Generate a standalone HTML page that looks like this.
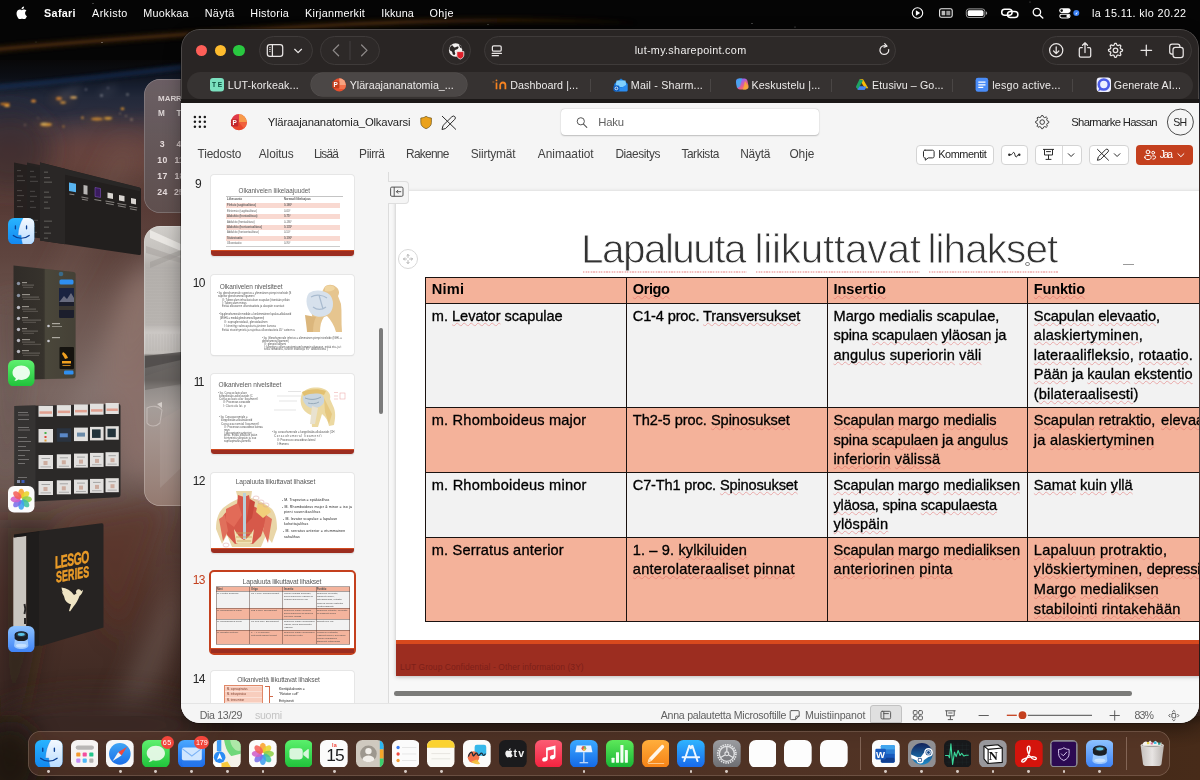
<!DOCTYPE html><html lang="fi"><head><meta charset="utf-8"><title>Yläraajananatomia_Olkavarsi</title><style>
html,body{margin:0;padding:0;background:#1a1210;width:1200px;height:780px;overflow:hidden;}
#root{filter:blur(0.4px);position:relative;width:1200px;height:780px;overflow:hidden;font-family:"Liberation Sans",sans-serif;}
#root div,#root svg,#root span{position:absolute;}
.t{white-space:pre;display:block;}
#win{left:181px;top:29.3px;width:1018.3px;height:693.4px;border-radius:18.5px;overflow:hidden;}
#winin{left:-181px;top:-29.3px;width:1200px;height:780px;}
.sq{height:1.7px;background:repeating-linear-gradient(90deg,rgba(232,130,130,0.5) 0 1.300px,rgba(232,130,130,0.18) 1.300px 2.600px);}
.t u{text-decoration:underline wavy rgba(225,85,85,0.42);text-decoration-thickness:0.5px;text-underline-offset:0.9px;text-decoration-skip-ink:none;}
</style></head><body><div id="root"><svg id="wall" style="left:0;top:0" width="1200" height="780" viewBox="0 0 1200 780">
<defs>
<linearGradient id="wg" x1="0" y1="0" x2="0" y2="1">
<stop offset="0" stop-color="#040404"/>
<stop offset="0.075" stop-color="#080707"/>
<stop offset="0.10" stop-color="#0c0f16"/>
<stop offset="0.112" stop-color="#161c28"/>
<stop offset="0.125" stop-color="#272b37"/>
<stop offset="0.14" stop-color="#30303c"/>
<stop offset="0.155" stop-color="#3e3741"/>
<stop offset="0.17" stop-color="#4d3c42"/>
<stop offset="0.19" stop-color="#5b3f3e"/>
<stop offset="0.21" stop-color="#60413b"/>
<stop offset="0.23" stop-color="#5c3f39"/>
<stop offset="0.27" stop-color="#583c37"/>
<stop offset="0.33" stop-color="#5f453f"/>
<stop offset="0.40" stop-color="#6e5751"/>
<stop offset="0.50" stop-color="#7a6762"/>
<stop offset="0.60" stop-color="#74615c"/>
<stop offset="0.68" stop-color="#5d433c"/>
<stop offset="0.76" stop-color="#50332b"/>
<stop offset="0.88" stop-color="#3f2a23"/>
<stop offset="1" stop-color="#2c1e18"/>
</linearGradient>
<filter id="b2" x="-20%" y="-50%" width="140%" height="200%"><feGaussianBlur stdDeviation="2"/></filter>
<filter id="b4" x="-20%" y="-50%" width="140%" height="200%"><feGaussianBlur stdDeviation="4"/></filter>
<filter id="b1" x="-20%" y="-50%" width="140%" height="200%"><feGaussianBlur stdDeviation="0.8"/></filter>
<filter id="b12" x="-50%" y="-50%" width="200%" height="200%"><feGaussianBlur stdDeviation="12"/></filter>
</defs>
<rect width="1200" height="780" fill="url(#wg)"/>
<rect x="0" y="0" width="1200" height="60" fill="#050505"/>
<linearGradient id="ob" gradientUnits="userSpaceOnUse" x1="0" y1="0" x2="640" y2="0"><stop offset="0" stop-color="#4e2c0c"/><stop offset="0.6" stop-color="#4a2a0c"/><stop offset="1" stop-color="#4a2a0c" stop-opacity="0"/></linearGradient>
<linearGradient id="ob2" gradientUnits="userSpaceOnUse" x1="0" y1="0" x2="640" y2="0"><stop offset="0" stop-color="#7a4a18"/><stop offset="0.6" stop-color="#7a4a18"/><stop offset="1" stop-color="#7a4a18" stop-opacity="0"/></linearGradient>
<path d="M-10 50 Q 120 38 300 27 T 640 23" stroke="url(#ob)" stroke-width="6" fill="none" filter="url(#b2)" opacity="0.62"/>
<path d="M-10 50 Q 120 38 300 27 T 640 23" stroke="url(#ob2)" stroke-width="1.5" fill="none" filter="url(#b1)" opacity="0.4"/>
<path d="M-10 92 Q 100 80 200 66 L200 112 L-10 122Z" fill="#1b2740" filter="url(#b4)" opacity="0.35"/>
<path d="M-10 88 Q 100 77.500 200 65" stroke="#1c3f78" stroke-width="2.500" fill="none" filter="url(#b2)" opacity="0.85"/>

<ellipse cx="120" cy="152" rx="70" ry="22" fill="#70463f" opacity="0.55" filter="url(#b12)"/>
<ellipse cx="10" cy="150" rx="40" ry="40" fill="#33282c" opacity="0.6" filter="url(#b12)"/>
<g filter="url(#b1)" opacity="0.92">
<ellipse cx="5" cy="104" rx="5" ry="1.300" fill="#c87820"/><ellipse cx="7" cy="106" rx="3" ry="0.900" fill="#ffb040"/>
<ellipse cx="33.500" cy="101" rx="2.600" ry="1.600" fill="#e89030"/>
<ellipse cx="59" cy="98.500" rx="3" ry="1.800" fill="#e88a2a"/><ellipse cx="63" cy="102.500" rx="3" ry="1.300" fill="#f4a83a"/><ellipse cx="73.500" cy="97.500" rx="3.500" ry="1.200" fill="#ffc060"/>
<ellipse cx="46" cy="124.500" rx="6" ry="1.700" fill="#f0a838"/><ellipse cx="44" cy="123.800" rx="3" ry="1" fill="#ffd870"/>
<ellipse cx="97" cy="119" rx="6" ry="1.500" fill="#f0a030"/><ellipse cx="108" cy="118.300" rx="4" ry="1.400" fill="#ffb838"/><circle cx="82.500" cy="117.800" r="1.200" fill="#e8a040"/>
<ellipse cx="122.500" cy="108.800" rx="1.800" ry="1.300" fill="#f0a030"/>
<circle cx="101.500" cy="95.500" r="1.100" fill="#b8b8c0"/><circle cx="108" cy="88" r="0.800" fill="#9a9aa8"/><circle cx="127.500" cy="94.500" r="1.100" fill="#a8a8a8"/><circle cx="86" cy="89.500" r="0.900" fill="#8a8a9a"/>
<circle cx="63.500" cy="126.500" r="1" fill="#d89038"/><circle cx="131.500" cy="119.500" r="1.200" fill="#a08070"/><circle cx="126" cy="116" r="0.800" fill="#c0a080"/><circle cx="120" cy="113.500" r="0.800" fill="#b09070"/>
<circle cx="25" cy="125" r="0.900" fill="#907060"/><circle cx="38" cy="118" r="0.800" fill="#806a60"/>
</g>
<g filter="url(#b4)" opacity="0.4">
<ellipse cx="62" cy="99" rx="12" ry="4" fill="#6a4a30"/><ellipse cx="100" cy="119" rx="14" ry="4" fill="#6a4a30"/><ellipse cx="45" cy="125" rx="10" ry="3.500" fill="#6a4a30"/>
<path d="M60 96l20-8M100 94l16-7" stroke="#8a8a98" stroke-width="3"/>
</g>
<g fill="#fff"><circle cx="102" cy="42.500" r="0.600" opacity="0.700"/><circle cx="93" cy="3.500" r="0.500" opacity="0.600"/><circle cx="36" cy="42" r="0.400" opacity="0.400"/><circle cx="752" cy="23.500" r="0.500" opacity="0.600"/><circle cx="795" cy="27" r="0.500" opacity="0.500"/><circle cx="488" cy="24.500" r="0.500" opacity="0.500"/><circle cx="1030" cy="2" r="0.500" opacity="0.500"/></g>
<g filter="url(#b12)">
<path d="M150 250 L60 420 L90 430 L181 270Z" fill="#9a8a86" opacity="0.35"/>
<ellipse cx="142" cy="375" rx="34" ry="105" fill="#94766f" opacity="0.6"/>
<path d="M120 140 L40 300 L60 300 L140 150Z" fill="#7a625c" opacity="0.35"/>
<path d="M181 560 L110 720 L140 720 L181 620Z" fill="#7a6862" opacity="0.5"/>
<path d="M0 520 L60 520 L20 720 L0 720Z" fill="#2a1c18" opacity="0.55"/>
<path d="M60 520 L170 500 L120 640Z" fill="#5a3026" opacity="0.6"/>
<path d="M0 300 L30 300 L10 480 L0 480Z" fill="#5a4842" opacity="0.5"/>
</g>
<linearGradient id="wb" x1="0" y1="0" x2="1" y2="0"><stop offset="0" stop-color="#2a1c17"/><stop offset="0.25" stop-color="#33211a"/><stop offset="0.6" stop-color="#3a2418"/><stop offset="1" stop-color="#472b19"/></linearGradient>
<linearGradient id="wb2" x1="0" y1="0" x2="0" y2="1"><stop offset="0" stop-color="#000" stop-opacity="0.3"/><stop offset="0.3" stop-color="#000" stop-opacity="0.1"/><stop offset="1" stop-color="#000" stop-opacity="0"/></linearGradient>
<rect x="0" y="716" width="1200" height="64" fill="url(#wb)"/>
<rect x="181" y="716" width="1019" height="30" fill="url(#wb2)"/>
<ellipse cx="100" cy="725" rx="110" ry="30" fill="#3c2c27" opacity="0.8" filter="url(#b12)"/>
<ellipse cx="10" cy="760" rx="30" ry="40" fill="#1e1411" opacity="0.8" filter="url(#b12)"/>
</svg><div style="left:144.2px;top:79.2px;width:60px;height:133.5px;background:linear-gradient(#6f6267,#675a5c 40%,#5f5050);border-radius:16px;box-shadow:inset 0 0 0 0.700px rgba(255,255,255,0.25);opacity:0.97"></div><span class="t" style="left:158.10px;top:95.23px;font-size:8px;line-height:8px;color:#ddd4d4;font-weight:700;letter-spacing:-0.067px;">MARR</span><span class="t" style="left:158.09px;top:109.86px;font-size:8.2px;line-height:8.2px;color:#ddd6d6;font-weight:700;">M</span><span class="t" style="left:176.39px;top:109.86px;font-size:8.2px;line-height:8.2px;color:#ddd6d6;font-weight:700;">T</span><span class="t" style="left:159.76px;top:140.44px;font-size:8.7px;line-height:8.7px;color:#e6dcdc;font-weight:700;">3</span><span class="t" style="left:176.56px;top:140.44px;font-size:8.7px;line-height:8.7px;color:#cdc0c0;font-weight:700;">4</span><span class="t" style="left:157.16px;top:156.04px;font-size:8.7px;line-height:8.7px;color:#e6dcdc;font-weight:700;letter-spacing:0.598px;">10</span><span class="t" style="left:174.56px;top:156.04px;font-size:8.7px;line-height:8.7px;color:#cdc0c0;font-weight:700;">11</span><span class="t" style="left:157.16px;top:172.14px;font-size:8.7px;line-height:8.7px;color:#e6dcdc;font-weight:700;letter-spacing:0.598px;">17</span><span class="t" style="left:174.56px;top:172.14px;font-size:8.7px;line-height:8.7px;color:#cdc0c0;font-weight:700;">18</span><span class="t" style="left:157.16px;top:187.74px;font-size:8.7px;line-height:8.7px;color:#e6dcdc;font-weight:700;letter-spacing:0.598px;">24</span><span class="t" style="left:174.06px;top:187.74px;font-size:8.7px;line-height:8.7px;color:#cdc0c0;font-weight:700;">25</span><div style="left:144.2px;top:226px;width:60px;height:279.5px;background:linear-gradient(#d0cdc9 0,#c6c3bf 9%,#b4b0ac 14%,#b9b5b1 35%,#cbc7c4 38%,#c0bcb8 45.500%,#6d6966 46.500%,#615d5b 55%,#918c89 57.500%,#a59d99 65%,#a4948e 75%,#9b857d 90%,#947a70 100%);border-radius:16px;box-shadow:inset 0 0 0 0.700px rgba(255,255,255,0.3)"></div><svg style="left:0;top:0" width="181" height="700" viewBox="0 0 181 700"><path d="M150 230l31 14v7l-31-13z" fill="#f0eeea" opacity="0.800"/><path d="M146 246l35 12v5l-35-10z" fill="#a8a4a0" opacity="0.600"/><path d="M150 262l31-12v5l-31 13z" fill="#9d9995" opacity="0.500"/><path d="M146 268h35" stroke="#a9a5a1" stroke-width="0.400" opacity="0.600"/><path d="M146 271h35" stroke="#a9a5a1" stroke-width="0.400" opacity="0.600"/><path d="M146 274h35" stroke="#a9a5a1" stroke-width="0.400" opacity="0.600"/><path d="M146 277h35" stroke="#a9a5a1" stroke-width="0.400" opacity="0.600"/><path d="M146 280h35" stroke="#a9a5a1" stroke-width="0.400" opacity="0.600"/><path d="M146 283h35" stroke="#a9a5a1" stroke-width="0.400" opacity="0.600"/><path d="M146 286h35" stroke="#a9a5a1" stroke-width="0.400" opacity="0.600"/><path d="M146 289h35" stroke="#a9a5a1" stroke-width="0.400" opacity="0.600"/><path d="M146 292h35" stroke="#a9a5a1" stroke-width="0.400" opacity="0.600"/><path d="M146 295h35" stroke="#a9a5a1" stroke-width="0.400" opacity="0.600"/><path d="M146 298h35" stroke="#a9a5a1" stroke-width="0.400" opacity="0.600"/><path d="M146 301h35" stroke="#a9a5a1" stroke-width="0.400" opacity="0.600"/><path d="M146 304h35" stroke="#a9a5a1" stroke-width="0.400" opacity="0.600"/><path d="M146 307h35" stroke="#a9a5a1" stroke-width="0.400" opacity="0.600"/><path d="M146 310h35" stroke="#a9a5a1" stroke-width="0.400" opacity="0.600"/><path d="M146 313h35" stroke="#a9a5a1" stroke-width="0.400" opacity="0.600"/><path d="M146 316h35" stroke="#a9a5a1" stroke-width="0.400" opacity="0.600"/><path d="M146 319h35" stroke="#a9a5a1" stroke-width="0.400" opacity="0.600"/><path d="M146 322h35" stroke="#a9a5a1" stroke-width="0.400" opacity="0.600"/><path d="M146 325h35" stroke="#a9a5a1" stroke-width="0.400" opacity="0.600"/><path d="M147 334v17" stroke="#b3afab" stroke-width="0.500" opacity="0.700"/><path d="M150 334v17" stroke="#b3afab" stroke-width="0.500" opacity="0.700"/><path d="M153 334v17" stroke="#b3afab" stroke-width="0.500" opacity="0.700"/><path d="M156 334v17" stroke="#b3afab" stroke-width="0.500" opacity="0.700"/><path d="M159 334v17" stroke="#b3afab" stroke-width="0.500" opacity="0.700"/><path d="M162 334v17" stroke="#b3afab" stroke-width="0.500" opacity="0.700"/><path d="M165 334v17" stroke="#b3afab" stroke-width="0.500" opacity="0.700"/><path d="M168 334v17" stroke="#b3afab" stroke-width="0.500" opacity="0.700"/><path d="M171 334v17" stroke="#b3afab" stroke-width="0.500" opacity="0.700"/><path d="M174 334v17" stroke="#b3afab" stroke-width="0.500" opacity="0.700"/><path d="M177 334v17" stroke="#b3afab" stroke-width="0.500" opacity="0.700"/><path d="M180 334v17" stroke="#b3afab" stroke-width="0.500" opacity="0.700"/><path d="M145 356l36-4v8l-36 8z" fill="#4e4a48" opacity="0.800"/><path d="M145 376l36-12v20l-36 6z" fill="#6b6663" opacity="0.600"/><path d="M147 408c5-3 12-2 15 2l-2 13c-4 4-10 4-13 0z" fill="none" stroke="#d8d0cc" stroke-width="1.100" opacity="0.550"/><path d="M157 404l5-2v6z" fill="#e8e2de" opacity="0.700"/><path d="M160 420l21-12v60l-21 20z" fill="#b1a49e" opacity="0.350"/></svg><svg style="left:0;top:0" width="181" height="700" viewBox="0 0 181 700"><path d="M14 162.500l30 6v70l-30-4z" fill="#211e1d" opacity="0.900"/><path d="M27 162.500l30 6v72l-30-4z" fill="#252221" opacity="0.950"/><path d="M40 162.600L139.500 187.500Q141 188 141 189.500V253.500Q141 255.500 139 255L40 240.500z" fill="#221f1e"/><path d="M40 162.600l25 6.200v75.500l-25-3.700z" fill="#2a2726"/><path d="M65 169l75 18.700v3.500l-75-16.500z" fill="#2c2928" opacity="0.800"/><rect x="17.0" y="170.0" width="4.0" height="1.100" fill="#8a8684" opacity="0.35"/><rect x="30.0" y="170.8" width="4.0" height="1.100" fill="#8a8684" opacity="0.35"/><rect x="44.0" y="171.6" width="4.0" height="1.100" fill="#8a8684" opacity="0.55"/><rect x="17.0" y="175.5" width="6.0" height="1.100" fill="#8a8684" opacity="0.35"/><rect x="30.0" y="176.3" width="6.0" height="1.100" fill="#8a8684" opacity="0.35"/><rect x="44.0" y="177.1" width="6.0" height="1.100" fill="#8a8684" opacity="0.55"/><rect x="17.0" y="180.0" width="8.0" height="1.100" fill="#8a8684" opacity="0.35"/><rect x="30.0" y="180.8" width="8.0" height="1.100" fill="#8a8684" opacity="0.35"/><rect x="44.0" y="181.6" width="8.0" height="1.100" fill="#8a8684" opacity="0.55"/><rect x="17.0" y="190.0" width="5.0" height="1.100" fill="#8a8684" opacity="0.35"/><rect x="30.0" y="190.8" width="5.0" height="1.100" fill="#8a8684" opacity="0.35"/><rect x="44.0" y="191.6" width="5.0" height="1.100" fill="#8a8684" opacity="0.55"/><rect x="17.0" y="195.0" width="7.0" height="1.100" fill="#8a8684" opacity="0.35"/><rect x="30.0" y="195.8" width="7.0" height="1.100" fill="#8a8684" opacity="0.35"/><rect x="44.0" y="196.6" width="7.0" height="1.100" fill="#8a8684" opacity="0.55"/><rect x="17.0" y="200.0" width="4.0" height="1.100" fill="#8a8684" opacity="0.35"/><rect x="30.0" y="200.8" width="4.0" height="1.100" fill="#8a8684" opacity="0.35"/><rect x="44.0" y="201.6" width="4.0" height="1.100" fill="#8a8684" opacity="0.55"/><rect x="17.0" y="206.0" width="6.0" height="1.100" fill="#8a8684" opacity="0.35"/><rect x="30.0" y="206.8" width="6.0" height="1.100" fill="#8a8684" opacity="0.35"/><rect x="44.0" y="207.6" width="6.0" height="1.100" fill="#8a8684" opacity="0.55"/><rect x="17.0" y="219.0" width="8.0" height="1.100" fill="#8a8684" opacity="0.35"/><rect x="30.0" y="219.8" width="8.0" height="1.100" fill="#8a8684" opacity="0.35"/><rect x="44.0" y="220.6" width="8.0" height="1.100" fill="#8a8684" opacity="0.55"/><rect x="17.0" y="225.0" width="5.0" height="1.100" fill="#8a8684" opacity="0.35"/><rect x="30.0" y="225.8" width="5.0" height="1.100" fill="#8a8684" opacity="0.35"/><rect x="44.0" y="226.6" width="5.0" height="1.100" fill="#8a8684" opacity="0.55"/><rect x="17.0" y="231.0" width="7.0" height="1.100" fill="#8a8684" opacity="0.35"/><rect x="30.0" y="231.8" width="7.0" height="1.100" fill="#8a8684" opacity="0.35"/><rect x="44.0" y="232.6" width="7.0" height="1.100" fill="#8a8684" opacity="0.55"/><rect x="17.0" y="236.0" width="4.0" height="1.100" fill="#8a8684" opacity="0.35"/><rect x="30.0" y="236.8" width="4.0" height="1.100" fill="#8a8684" opacity="0.35"/><rect x="44.0" y="237.6" width="4.0" height="1.100" fill="#8a8684" opacity="0.55"/><path d="M69 182.500l7 1.300v8.500l-7-1.200z" fill="#58b4f0"/><path d="M83.500 185l4 0.700v9l-4-0.700z" fill="#b8b6b4"/><path d="M95 187.500l5.500 1v9l-5.500-1z" fill="#3a1c5e" stroke="#8a5ad0" stroke-width="0.500"/><path d="M107.500 192.500l5.500 1v5.500l-5.500-1z" fill="#d8d4d0"/><path d="M119 195l5.500 1v5.500l-5.500-1z" fill="#d8d4d0"/><path d="M131 198l5 0.900v5.500l-5-0.900z" fill="#d8d4d0"/><rect x="69.5" y="193.5" width="5.0" height="1" fill="#b0aca8" opacity="0.700" transform="rotate(10 69.5 193.5)"/><rect x="81.5" y="196.5" width="7.0" height="1" fill="#b0aca8" opacity="0.700" transform="rotate(10 81.5 196.5)"/><rect x="82.0" y="198.7" width="6.0" height="1" fill="#b0aca8" opacity="0.700" transform="rotate(10 82.0 198.7)"/><rect x="94.5" y="199.0" width="7.0" height="1" fill="#b0aca8" opacity="0.700" transform="rotate(10 94.5 199.0)"/><rect x="105.5" y="200.5" width="9.0" height="1" fill="#b0aca8" opacity="0.700" transform="rotate(10 105.5 200.5)"/><rect x="106.0" y="202.8" width="8.0" height="1" fill="#b0aca8" opacity="0.700" transform="rotate(10 106.0 202.8)"/><rect x="117.5" y="203.0" width="9.0" height="1" fill="#b0aca8" opacity="0.700" transform="rotate(10 117.5 203.0)"/><rect x="118.0" y="205.3" width="8.0" height="1" fill="#b0aca8" opacity="0.700" transform="rotate(10 118.0 205.3)"/><rect x="129.5" y="206.0" width="8.0" height="1" fill="#b0aca8" opacity="0.700" transform="rotate(10 129.5 206.0)"/><rect x="130.0" y="208.2" width="7.0" height="1" fill="#b0aca8" opacity="0.700" transform="rotate(10 130.0 208.2)"/></svg><svg style="left:8px;top:217.8px;" width="26.5" height="26.5" viewBox="0 0 100 100"><defs><linearGradient id="fi1" x1="0" y1="0" x2="0" y2="1"><stop offset="0" stop-color="#28b4ff"/><stop offset="1" stop-color="#1287f0"/></linearGradient><linearGradient id="fi2" x1="0" y1="0" x2="0" y2="1"><stop offset="0" stop-color="#f4f9ff"/><stop offset="1" stop-color="#b9dcff"/></linearGradient><clipPath id="fic"><rect x="0" y="0" width="100" height="100" rx="23"/></clipPath></defs>
<g clip-path="url(#fic)"><rect width="100" height="100" fill="url(#fi1)"/><path d="M57 0H100V100H55C52 88 50 77 49.500 65H38C39 40 46 18 57 0Z" fill="url(#fi2)"/>
<path d="M57 0C46 18 39 40 38 65H49.500C50 77 52 88 55 100" fill="none" stroke="#1a6fd0" stroke-width="2" opacity="0.500"/><path d="M20 66c17 14 43 14 60 0" fill="none" stroke="#0b3f94" stroke-width="4.500" stroke-linecap="round"/><path d="M28 30v11M70 30v11" stroke="#0b3f94" stroke-width="5" stroke-linecap="round"/></g></svg><svg style="left:0;top:0" width="181" height="700" viewBox="0 0 181 700"><defs><linearGradient id="mw" x1="0" y1="0" x2="1" y2="0"><stop offset="0" stop-color="#302c28"/><stop offset="0.480" stop-color="#36322c"/><stop offset="0.520" stop-color="#444036"/><stop offset="1" stop-color="#3c382f"/></linearGradient></defs><path d="M13.500 265.500L73.500 272Q75.500 272.300 75.500 274V376Q75.500 378 73.500 378.200L13.500 380z" fill="url(#mw)"/><path d="M45 269l30.500 3.200v106l-30.500 1z" fill="#565245" opacity="0.350"/><circle cx="18.500" cy="283.5" r="1.700" fill="#8890a0"/><rect x="22" y="282.0" width="5" height="1.200" fill="#d8d4cc" opacity="0.600"/><rect x="22" y="284.6" width="12" height="1" fill="#a8a49c" opacity="0.450"/><rect x="23" y="286.8" width="10" height="1" fill="#a8a49c" opacity="0.350"/><circle cx="18.500" cy="295.5" r="1.700" fill="#8890a0"/><rect x="22" y="294.0" width="8" height="1.200" fill="#d8d4cc" opacity="0.600"/><rect x="22" y="296.6" width="17" height="1" fill="#a8a49c" opacity="0.450"/><rect x="23" y="298.8" width="17" height="1" fill="#a8a49c" opacity="0.350"/><circle cx="18.500" cy="307.5" r="1.700" fill="#b8b8c0"/><rect x="22" y="306.0" width="7" height="1.200" fill="#d8d4cc" opacity="0.600"/><rect x="22" y="308.6" width="14" height="1" fill="#a8a49c" opacity="0.450"/><rect x="23" y="310.8" width="15" height="1" fill="#a8a49c" opacity="0.350"/><circle cx="18.500" cy="318.5" r="1.700" fill="#b8b8c0"/><rect x="22" y="317.0" width="6" height="1.200" fill="#d8d4cc" opacity="0.600"/><rect x="22" y="319.6" width="19" height="1" fill="#a8a49c" opacity="0.450"/><rect x="23" y="321.8" width="13" height="1" fill="#a8a49c" opacity="0.350"/><circle cx="18.500" cy="329.5" r="1.700" fill="#b8b8c0"/><rect x="22" y="328.0" width="5" height="1.200" fill="#d8d4cc" opacity="0.600"/><rect x="22" y="330.6" width="16" height="1" fill="#a8a49c" opacity="0.450"/><rect x="23" y="332.8" width="11" height="1" fill="#a8a49c" opacity="0.350"/><circle cx="18.500" cy="340.5" r="1.700" fill="#b8b8c0"/><rect x="22" y="339.0" width="8" height="1.200" fill="#d8d4cc" opacity="0.600"/><rect x="22" y="341.6" width="13" height="1" fill="#a8a49c" opacity="0.450"/><rect x="23" y="343.8" width="18" height="1" fill="#a8a49c" opacity="0.350"/><circle cx="18.500" cy="351.5" r="1.700" fill="#b8b8c0"/><rect x="22" y="350.0" width="7" height="1.200" fill="#d8d4cc" opacity="0.600"/><rect x="22" y="352.6" width="18" height="1" fill="#a8a49c" opacity="0.450"/><rect x="23" y="354.8" width="16" height="1" fill="#a8a49c" opacity="0.350"/><circle cx="61" cy="274" r="2.300" fill="#3a6a8a"/><rect x="59.500" y="279.500" width="14" height="5" rx="1.500" fill="#2f8ff0"/><rect x="59" y="288" width="15" height="30" rx="1" fill="#1c1e2c"/><rect x="59" y="288" width="15" height="14" fill="#1a2340"/><path d="M60 301l4-5 3 3 4-6 3 5v4H59z" fill="#8a8a98" opacity="0.700"/><rect x="59" y="306" width="15" height="4" fill="#3a3630"/><rect x="59.500" y="347" width="14.500" height="22" rx="1" fill="#15130f"/><path d="M63 352c2 1 4 3 5 6l-3 1c-1-2-2-4-3-5z" fill="#f0a020"/><rect x="62" y="361" width="9" height="2.500" fill="#f0a020"/><rect x="62.500" y="365" width="8" height="1" fill="#c08020"/><rect x="64" y="370.500" width="9.500" height="4" rx="1.200" fill="#2f8ff0"/><rect x="52" y="323" width="8" height="1.200" fill="#d8d4cc" opacity="0.700"/><rect x="52" y="326" width="10" height="1" fill="#d8d4cc" opacity="0.500"/><rect x="52" y="337" width="8" height="1.200" fill="#d8d4cc" opacity="0.700"/><circle cx="48.500" cy="326" r="1.300" fill="#c8c8d0"/><circle cx="48.500" cy="341" r="1.300" fill="#c8c8d0"/></svg><svg style="left:8px;top:359.5px;" width="26.5" height="26.5" viewBox="0 0 100 100"><defs><linearGradient id="mss" x1="0" y1="0" x2="0" y2="1"><stop offset="0" stop-color="#5ff06f"/><stop offset="1" stop-color="#1fc23a"/></linearGradient></defs><rect width="100" height="100" rx="23" fill="url(#mss)"/><path d="M50 21c19 0 33 12 33 27S69 75 50 75c-4 0-8-0.500-11-1.500-4 3.500-9 5.500-15 6 3-3 5-6.500 5.500-10.500C22 64 17 56.500 17 48c0-15 14-27 33-27z" fill="#f4fff4" opacity="0.950"/></svg><svg style="left:0;top:0" width="181" height="700" viewBox="0 0 181 700"><path d="M14.500 406L118.500 404Q120.500 404 120.500 406V495Q120.500 497 118.500 497.200L14.500 502.500z" fill="#2b2928"/><path d="M14.500 406l21-0.400v96.300l-21 0.600z" fill="#353332"/><rect x="18" y="412.0" width="10" height="1" fill="#9a9896" opacity="0.600"/><rect x="18" y="414.5" width="11" height="1" fill="#9a9896" opacity="0.600"/><rect x="18" y="419.0" width="11" height="1" fill="#9a9896" opacity="0.600"/><rect x="18" y="427.0" width="11" height="1" fill="#9a9896" opacity="0.600"/><rect x="18" y="429.5" width="12" height="1" fill="#9a9896" opacity="0.600"/><rect x="18" y="437.0" width="9" height="1" fill="#9a9896" opacity="0.600"/><rect x="18" y="441.0" width="13" height="1" fill="#9a9896" opacity="0.600"/><rect x="18" y="446.0" width="8" height="1" fill="#9a9896" opacity="0.600"/><rect x="18" y="450.0" width="12" height="1" fill="#9a9896" opacity="0.600"/><rect x="18" y="455.0" width="7" height="1" fill="#9a9896" opacity="0.600"/><rect x="18" y="459.0" width="11" height="1" fill="#9a9896" opacity="0.600"/><rect x="18" y="463.0" width="7" height="1" fill="#9a9896" opacity="0.600"/><rect x="18" y="477.0" width="9" height="1" fill="#9a9896" opacity="0.600"/><rect x="17" y="480" width="3" height="3" fill="#8890a8"/><rect x="21.500" y="480" width="3" height="3" fill="#3a5ab8"/><rect x="38.5" y="405.8" width="14.5" height="11.0" fill="#e2e0de"/><rect x="39.5" y="411.3" width="12.5" height="2.500" fill="#e0a090"/><rect x="56.8" y="405.1" width="14.2" height="11.0" fill="#e2e0de"/><rect x="57.8" y="410.6" width="12.2" height="2.500" fill="#e0a090"/><rect x="74.0" y="404.4" width="13.9" height="11.0" fill="#e2e0de"/><rect x="75.0" y="409.9" width="11.9" height="2.500" fill="#e0a090"/><rect x="90.0" y="403.7" width="13.6" height="11.0" fill="#e2e0de"/><rect x="91.0" y="409.2" width="11.6" height="2.500" fill="#e0a090"/><rect x="105.5" y="403.0" width="13.3" height="11.0" fill="#e2e0de"/><rect x="106.5" y="408.5" width="11.3" height="2.500" fill="#e0a090"/><rect x="38.5" y="429.0" width="14.5" height="13.5" fill="#e2e0de"/><rect x="44.5" y="432.0" width="2" height="2" fill="#4ab04a"/><rect x="44.5" y="436.0" width="2" height="2" fill="#e04a3a"/><rect x="44.5" y="439.5" width="2" height="2" fill="#e0a03a"/><rect x="56.8" y="428.3" width="14.2" height="13.5" fill="#2a3340"/><rect x="59.8" y="433.3" width="8" height="4" fill="#5a88c8"/><rect x="74.0" y="427.6" width="13.9" height="13.5" fill="#e2e0de"/><rect x="77.0" y="432.6" width="8" height="4" fill="#6a8aa8"/><rect x="90.0" y="426.9" width="13.6" height="13.5" fill="#e2e0de"/><rect x="92.0" y="429.4" width="8.6" height="8.5" fill="#22343c"/><rect x="105.5" y="426.2" width="13.3" height="13.5" fill="#e2e0de"/><rect x="107.5" y="428.7" width="8.3" height="8.5" fill="#22343c"/><rect x="38.5" y="455.0" width="14.5" height="14.0" fill="#e2e0de"/><rect x="41.5" y="458.0" width="8.5" height="1" fill="#8a8a8a" opacity="0.700"/><rect x="43.5" y="461.0" width="4" height="4" fill="#c8a090" opacity="0.800"/><rect x="40.5" y="466.5" width="10.5" height="0.800" fill="#a0a0a0"/><rect x="56.8" y="454.3" width="14.2" height="14.0" fill="#e2e0de"/><rect x="59.8" y="457.3" width="8.2" height="1" fill="#8a8a8a" opacity="0.700"/><rect x="61.8" y="460.3" width="4" height="4" fill="#c8a090" opacity="0.800"/><rect x="58.8" y="465.8" width="10.2" height="0.800" fill="#a0a0a0"/><rect x="74.0" y="453.6" width="13.9" height="14.0" fill="#e2e0de"/><rect x="77.0" y="456.6" width="7.9" height="1" fill="#8a8a8a" opacity="0.700"/><rect x="79.0" y="459.6" width="4" height="4" fill="#c8a090" opacity="0.800"/><rect x="76.0" y="465.1" width="9.9" height="0.800" fill="#a0a0a0"/><rect x="90.0" y="452.9" width="13.6" height="14.0" fill="#e2e0de"/><rect x="93.0" y="455.9" width="7.6" height="1" fill="#8a8a8a" opacity="0.700"/><rect x="95.0" y="458.9" width="4" height="4" fill="#c8a090" opacity="0.800"/><rect x="92.0" y="464.4" width="9.6" height="0.800" fill="#a0a0a0"/><rect x="105.5" y="452.2" width="13.3" height="14.0" fill="#e2e0de"/><rect x="108.5" y="455.2" width="7.3" height="1" fill="#8a8a8a" opacity="0.700"/><rect x="110.5" y="458.2" width="4" height="4" fill="#c8a090" opacity="0.800"/><rect x="107.5" y="463.7" width="9.3" height="0.800" fill="#a0a0a0"/><rect x="38.5" y="481.0" width="14.5" height="14.0" fill="#e2e0de"/><rect x="41.5" y="484.0" width="8.5" height="1" fill="#8a8a8a" opacity="0.700"/><rect x="43.5" y="487.0" width="4" height="4" fill="#c8a090" opacity="0.800"/><rect x="40.5" y="492.5" width="10.5" height="0.800" fill="#a0a0a0"/><rect x="56.8" y="480.3" width="14.2" height="14.0" fill="#e2e0de"/><rect x="59.8" y="483.3" width="8.2" height="1" fill="#8a8a8a" opacity="0.700"/><rect x="61.8" y="486.3" width="4" height="4" fill="#c8a090" opacity="0.800"/><rect x="58.8" y="491.8" width="10.2" height="0.800" fill="#a0a0a0"/><rect x="74.0" y="479.6" width="13.9" height="14.0" fill="#e2e0de"/><rect x="77.0" y="482.6" width="7.9" height="1" fill="#8a8a8a" opacity="0.700"/><rect x="79.0" y="485.6" width="4" height="4" fill="#c8a090" opacity="0.800"/><rect x="76.0" y="491.1" width="9.9" height="0.800" fill="#a0a0a0"/><rect x="90.0" y="478.9" width="13.6" height="14.0" fill="#e2e0de"/><rect x="93.0" y="481.9" width="7.6" height="1" fill="#8a8a8a" opacity="0.700"/><rect x="95.0" y="484.9" width="4" height="4" fill="#c8a090" opacity="0.800"/><rect x="92.0" y="490.4" width="9.6" height="0.800" fill="#a0a0a0"/><rect x="105.5" y="478.2" width="13.3" height="14.0" fill="#e2e0de"/><rect x="108.5" y="481.2" width="7.3" height="1" fill="#8a8a8a" opacity="0.700"/><rect x="110.5" y="484.2" width="4" height="4" fill="#c8a090" opacity="0.800"/><rect x="107.5" y="489.7" width="9.3" height="0.800" fill="#a0a0a0"/></svg><svg style="left:8px;top:486.3px;" width="26.5" height="26.5" viewBox="0 0 100 100"><rect width="100" height="100" rx="23" fill="#fbfbfb"/><ellipse cx="50" cy="29" rx="11.500" ry="19" fill="#f9a32a" opacity="0.880" transform="rotate(0 50 50)"/><ellipse cx="50" cy="29" rx="11.500" ry="19" fill="#e8d42a" opacity="0.880" transform="rotate(45 50 50)"/><ellipse cx="50" cy="29" rx="11.500" ry="19" fill="#8fcf4a" opacity="0.880" transform="rotate(90 50 50)"/><ellipse cx="50" cy="29" rx="11.500" ry="19" fill="#3fc0a0" opacity="0.880" transform="rotate(135 50 50)"/><ellipse cx="50" cy="29" rx="11.500" ry="19" fill="#3f9ff0" opacity="0.880" transform="rotate(180 50 50)"/><ellipse cx="50" cy="29" rx="11.500" ry="19" fill="#7a70e8" opacity="0.880" transform="rotate(225 50 50)"/><ellipse cx="50" cy="29" rx="11.500" ry="19" fill="#d060c8" opacity="0.880" transform="rotate(270 50 50)"/><ellipse cx="50" cy="29" rx="11.500" ry="19" fill="#f4605a" opacity="0.880" transform="rotate(315 50 50)"/><circle cx="50" cy="50" r="4" fill="#fff" opacity="0.900"/></svg><svg style="left:0;top:0" width="181" height="700" viewBox="0 0 181 700"><path d="M13.300 537.500l13-1.500v112l-13-1z" fill="#c9c5bf"/><path d="M14 534.500l26-3.500v3l-26 3.500z" fill="#1a1818"/><path d="M26.500 533.500l13-2v114l-13 2.500z" fill="#1f1d1c"/><path d="M39.200 531L101.500 523.300Q103.500 523 103.500 525V627.500L41 646 39.200 645z" fill="#262322"/><path d="M24.500 604c1 3 1 7 0 10M25 618v6" stroke="#2a2828" stroke-width="2" fill="none"/><path d="M61.500 587.500c5 0.500 9.500 3 12.500 7.500l2.500-1.500c-1-1.500-0.500-3.300 1-4 1.600-0.700 3.300 0.200 3.700 1.800l1.800-1.600c-0.200 2.500-1.500 4.700-3.500 6.200-1.500 4-3.500 7.500-6 10.500l-3.500 5-1-0.600 2-6.500c-2.500-0.500-4.500-2-6-4.500l-1-3.500c-1-1.500-1.800-3.200-2.500-5.300l1.500 1.800c-0.800-1.800-1.300-3.500-1.500-5.300z" fill="#efe4c4"/></svg><span class="t" style="left:55.48px;top:562.18px;font-size:10.3px;line-height:10.3px;color:#ea9a26;font-weight:700;letter-spacing:-0.429px;transform-origin:0 100%;transform:skewY(-10deg) scaleY(1.68);-webkit-text-stroke:0.3px #f2a32c;">LESGO</span><span class="t" style="left:55.95px;top:576.57px;font-size:8.9px;line-height:8.9px;color:#ea9a26;font-weight:700;letter-spacing:0.126px;transform-origin:0 100%;transform:skewY(-10deg) scaleY(1.76);-webkit-text-stroke:0.3px #f2a32c;">SERIES</span><svg style="left:8px;top:625.8px;" width="26.5" height="26.5" viewBox="0 0 100 100"><defs><linearGradient id="pvs" x1="0" y1="0" x2="0" y2="1"><stop offset="0" stop-color="#8dc2ff"/><stop offset="1" stop-color="#3d82f6"/></linearGradient></defs><rect width="100" height="100" rx="23" fill="url(#pvs)"/><path d="M27 42h46l4 32c0 8-12 13-27 13s-27-5-27-13z" fill="#a9d1ff" opacity="0.850"/><ellipse cx="50" cy="74" rx="20" ry="7" fill="#cfe6ff" opacity="0.800"/><ellipse cx="50" cy="33" rx="25" ry="13" fill="#15181c"/><path d="M25 33v12c0 7 11 12 25 12s25-5 25-12V33z" fill="#1b1f25"/><ellipse cx="50" cy="32" rx="19" ry="9" fill="#2b3a48"/><ellipse cx="50" cy="32" rx="13" ry="5.500" fill="#59c4e8"/></svg><svg style="left:16.2px;top:5.6px;" width="11.6" height="13.6" viewBox="1.5 2 14.4 17.4"><path fill="#fff" d="M12.9 11.2c0-2 1.6-2.9 1.7-3-0.9-1.4-2.4-1.6-2.9-1.6-1.2-0.1-2.4 0.7-3 0.7-0.6 0-1.6-0.7-2.6-0.7C4.7 6.700 3.400 7.500 2.700 8.700c-1.500 2.500-0.400 6.300 1 8.300 0.700 1 1.500 2.100 2.600 2.100 1 0 1.400-0.700 2.700-0.700 1.200 0 1.600 0.700 2.700 0.700 1.100 0 1.800-1 2.500-2 0.800-1.200 1.100-2.300 1.100-2.300 0 0-2.400-0.900-2.400-3.600zM10.800 5.100c0.600-0.700 0.900-1.600 0.800-2.600-0.800 0-1.800 0.500-2.400 1.200-0.500 0.600-1 1.600-0.800 2.500 0.900 0.100 1.800-0.400 2.400-1.100z"/></svg><span class="t" style="left:44.06px;top:7.86px;font-size:10.8px;line-height:10.8px;color:#fff;font-weight:700;letter-spacing:0.313px;">Safari</span><span class="t" style="left:92.06px;top:7.86px;font-size:10.8px;line-height:10.8px;color:#fff;letter-spacing:0.380px;">Arkisto</span><span class="t" style="left:143.36px;top:7.86px;font-size:10.8px;line-height:10.8px;color:#fff;letter-spacing:0.228px;">Muokkaa</span><span class="t" style="left:204.66px;top:7.86px;font-size:10.8px;line-height:10.8px;color:#fff;letter-spacing:0.365px;">Näytä</span><span class="t" style="left:250.36px;top:7.86px;font-size:10.8px;line-height:10.8px;color:#fff;letter-spacing:0.267px;">Historia</span><span class="t" style="left:305.06px;top:7.86px;font-size:10.8px;line-height:10.8px;color:#fff;letter-spacing:0.253px;">Kirjanmerkit</span><span class="t" style="left:381.26px;top:7.86px;font-size:10.8px;line-height:10.8px;color:#fff;letter-spacing:0.153px;">Ikkuna</span><span class="t" style="left:429.56px;top:7.86px;font-size:10.8px;line-height:10.8px;color:#fff;letter-spacing:0.422px;">Ohje</span><span class="t" style="left:1092.06px;top:7.86px;font-size:10.8px;line-height:10.8px;color:#fff;letter-spacing:0.363px;">la 15.11. klo 20.22</span><svg style="left:0;top:0" width="1200" height="29" viewBox="0 0 1200 29"><circle cx="917.5" cy="13" r="5.2" fill="none" stroke="#fff" stroke-width="1.1"/><path d="M915.9 10.3l4.3 2.700-4.300 2.700z" fill="#fff"/><rect x="939.6" y="8.800" width="12.6" height="8.500" rx="1.800" fill="none" stroke="#eee" stroke-width="1.1"/><rect x="941.6" y="10.800" width="3.600" height="4.500" fill="#bbb"/><rect x="946.3" y="10.800" width="4" height="4.500" fill="#999"/><rect x="966.3" y="8.900" width="18.6" height="8.600" rx="2.600" fill="none" stroke="#aaa" stroke-width="0.9"/><rect x="967.7" y="10.300" width="15.8" height="5.800" rx="1.500" fill="#fff"/><path d="M986 11.600c0.900 0.300 1.100 1 1.100 1.600s-0.200 1.300-1.100 1.600z" fill="#aaa"/><g fill="none" stroke="#fff" stroke-width="1.500"><rect x="1001.700" y="9.300" width="10.400" height="6" rx="3"/><rect x="1007.500" y="11.500" width="10.400" height="6" rx="3"/></g><circle cx="1036.900" cy="12.100" r="3.700" fill="none" stroke="#fff" stroke-width="1.300"/><path d="M1039.600 14.900l3.200 3.200" stroke="#fff" stroke-width="1.400" stroke-linecap="round"/><rect x="1059.200" y="8.300" width="11.400" height="4.600" rx="2.300" fill="#fff"/><circle cx="1061.700" cy="10.600" r="1.300" fill="#111"/><rect x="1059.800" y="14.200" width="10.200" height="3.800" rx="1.900" fill="none" stroke="#fff" stroke-width="1.100"/><circle cx="1068" cy="16.100" r="1.600" fill="#fff"/><circle cx="1076.300" cy="13" r="3" fill="#3b82f6"/><path d="M1075 14.300l2.800-2.700-1.200 3z" fill="#fff" opacity="0.9"/></svg><div style="left:181px;top:29.3px;width:1018.3px;height:693.4px;border-radius:18.5px;box-shadow:0 6px 18px rgba(0,0,0,0.32),0 0 0 0.600px rgba(0,0,0,0.5)"></div><div id="win"><div id="winin"><div style="left:181px;top:29.3px;width:1018.3px;height:90px;background:#292524;border-radius:18.5px 18.5px 0 0;box-shadow:inset 0 0 0 1px rgba(255,255,255,0.17)"></div><div style="left:181px;top:99.3px;width:1019px;height:3.4px;background:#1b1817"></div><div style="left:195.7px;top:44.7px;width:11.6px;height:11.6px;background:#fe5f58;border-radius:50%"></div><div style="left:214.6px;top:44.7px;width:11.6px;height:11.6px;background:#febc2e;border-radius:50%"></div><div style="left:233.29999999999998px;top:44.7px;width:11.6px;height:11.6px;background:#29c840;border-radius:50%"></div><div style="left:259.4px;top:35.8px;width:53.7px;height:29.3px;background:#2d2928;border:1px solid #3f3b3a;box-sizing:border-box;border-radius:15px"></div><div style="left:320px;top:35.8px;width:59.5px;height:29.3px;background:#2d2928;border:1px solid #3f3b3a;box-sizing:border-box;border-radius:15px"></div><div style="left:441.8px;top:35.8px;width:29px;height:29.3px;background:#2d2928;border:1px solid #3f3b3a;box-sizing:border-box;border-radius:15px"></div><div style="left:484.3px;top:35.8px;width:412px;height:29.3px;background:#2d2928;border:1px solid #3f3b3a;box-sizing:border-box;border-radius:15px"></div><div style="left:1042px;top:35.8px;width:150.3px;height:29.3px;background:#2d2928;border:1px solid #3f3b3a;box-sizing:border-box;border-radius:15px"></div><svg style="left:0;top:0" width="1200" height="102" viewBox="0 0 1200 102"><rect x="267.3" y="44.6" width="15.4" height="11.8" rx="2.6" fill="none" stroke="#e9e6e5" stroke-width="1.25" stroke-linecap="round" stroke-linejoin="round"/><path d="M272.4 44.800v11.400" fill="none" stroke="#e9e6e5" stroke-width="1.25" stroke-linecap="round" stroke-linejoin="round"/><path d="M269 47.600h1.800M269 49.500h1.800M269 51.400h1.800" stroke="#e9e6e5" stroke-width="0.7"/><path d="M294.700 49.300l3.400 3.300 3.400-3.300" fill="none" stroke="#e9e6e5" stroke-width="1.25" stroke-linecap="round" stroke-linejoin="round" stroke-width="1.4"/><path d="M338.600 45l-5.400 5.400 5.400 5.400" fill="none" stroke="#8d8988" stroke-width="1.3" stroke-linecap="round" stroke-linejoin="round"/><path d="M361.600 45l5.400 5.400-5.400 5.400" fill="none" stroke="#8d8988" stroke-width="1.3" stroke-linecap="round" stroke-linejoin="round"/><path d="M350 41v19" stroke="#454140" stroke-width="1"/><circle cx="455.600" cy="50" r="6.700" fill="#f3f1f0"/><path d="M452 45.200c1.500 0.600 1.200 2 2.600 2.200 1.300 0.200 1.800-1.400 3.400-0.800 1 0.400 0.600 1.800-0.400 2.400-1.400 0.800-2.800 0.600-3 2-0.200 1.200 1 1.700 0.600 3-0.300 1-1.500 1.200-2.200 0.400-0.800-1-0.300-2-1.200-3-0.800-0.900-2-0.700-2.200-2-0.200-1.300 0.800-3.400 2.400-4.200z" fill="#2a2625"/><path d="M459.300 44.600c1.300 0.700 2.300 2.200 2.600 3.600-0.900 0.200-1.500-0.200-1.900-1-0.400-0.800-0.900-1.600-0.700-2.600z" fill="#2a2625"/><path d="M456.800 51.600h7v3.600c0 1.900-1.500 3.100-3.500 3.900-2-0.800-3.500-2-3.500-3.900z" fill="#e0202a" stroke="#f3f1f0" stroke-width="0.8"/><rect x="492.400" y="45.800" width="8.800" height="5.400" rx="1.300" fill="none" stroke="#e9e6e5" stroke-width="1.25" stroke-linecap="round" stroke-linejoin="round" stroke-width="1.100"/><path d="M492.200 53.400h9.200M492.200 55.700h6.200" fill="none" stroke="#e9e6e5" stroke-width="1.25" stroke-linecap="round" stroke-linejoin="round" stroke-width="1.100"/><path d="M888.700 49.600a4.400 4.400 0 1 1-2.300-3.400" fill="none" stroke="#e9e6e5" stroke-width="1.25" stroke-linecap="round" stroke-linejoin="round" stroke-width="1.200"/><path d="M884.700 43.600l2.300 2.500-2.900 1.100" fill="none" stroke="#e9e6e5" stroke-width="1.25" stroke-linecap="round" stroke-linejoin="round" stroke-width="1.100"/><circle cx="1056.200" cy="50.300" r="6.600" fill="none" stroke="#e9e6e5" stroke-width="1.25" stroke-linecap="round" stroke-linejoin="round"/><path d="M1056.200 46.800v6.600M1053.600 51l2.600 2.600 2.600-2.600" fill="none" stroke="#e9e6e5" stroke-width="1.25" stroke-linecap="round" stroke-linejoin="round"/><path d="M1082.300 47.500h-1.600c-0.900 0-1.400 0.500-1.400 1.400v6.800c0 0.900 0.500 1.400 1.400 1.400h8.600c0.900 0 1.400-0.500 1.400-1.400v-6.800c0-0.900-0.500-1.400-1.400-1.400h-1.600" fill="none" stroke="#e9e6e5" stroke-width="1.25" stroke-linecap="round" stroke-linejoin="round"/><path d="M1085 52.500v-9.300M1082.500 45.300l2.500-2.500 2.500 2.500" fill="none" stroke="#e9e6e5" stroke-width="1.25" stroke-linecap="round" stroke-linejoin="round"/><path d="M1122.47 49.61L1122.47 50.99L1120.57 51.84L1120.17 52.80L1120.91 54.74L1119.94 55.71L1118.00 54.97L1117.04 55.37L1116.19 57.27L1114.81 57.27L1113.96 55.37L1113.00 54.97L1111.06 55.71L1110.09 54.74L1110.83 52.80L1110.43 51.84L1108.53 50.99L1108.53 49.61L1110.43 48.76L1110.83 47.80L1110.09 45.86L1111.06 44.89L1113.00 45.63L1113.96 45.23L1114.81 43.33L1116.19 43.33L1117.04 45.23L1118.00 45.63L1119.94 44.89L1120.91 45.86L1120.17 47.80L1120.57 48.76Z" fill="none" stroke="#e9e6e5" stroke-width="1.25" stroke-linecap="round" stroke-linejoin="round" stroke-width="1.150"/><circle cx="1115.500" cy="50.300" r="2.300" fill="none" stroke="#e9e6e5" stroke-width="1.25" stroke-linecap="round" stroke-linejoin="round" stroke-width="1.150"/><path d="M1141 50.300h10.600M1146.300 45v10.600" fill="none" stroke="#e9e6e5" stroke-width="1.25" stroke-linecap="round" stroke-linejoin="round" stroke-width="1.400"/><rect x="1169.700" y="44" width="10.200" height="10.200" rx="2.400" fill="none" stroke="#e9e6e5" stroke-width="1.25" stroke-linecap="round" stroke-linejoin="round"/><rect x="1173" y="47.400" width="10.200" height="10.200" rx="2.400" fill="#2d2928" stroke="#e9e6e5" stroke-width="1.250"/></svg><span class="t" style="left:634.66px;top:45.06px;font-size:10.8px;line-height:10.8px;color:#f0eeed;letter-spacing:0.303px;">lut-my.sharepoint.com</span><div style="left:187px;top:71.8px;width:1006.3px;height:27.4px;background:#363231;border-radius:13.7px"></div><div style="left:310.5px;top:73.3px;width:156.5px;height:22.9px;background:#4b4746;border-radius:11.5px;box-shadow:0 0 0 0.5px #5a5655"></div><div style="left:589.8px;top:79px;width:1px;height:12.5px;background:#4a4645"></div><div style="left:710.3px;top:79px;width:1px;height:12.5px;background:#4a4645"></div><div style="left:830.9px;top:79px;width:1px;height:12.5px;background:#4a4645"></div><div style="left:951.5px;top:79px;width:1px;height:12.5px;background:#4a4645"></div><div style="left:1072.1px;top:79px;width:1px;height:12.5px;background:#4a4645"></div><span class="t" style="left:227.66px;top:79.84px;font-size:10.7px;line-height:10.7px;color:#eceae9;letter-spacing:0.121px;">LUT-korkeak...</span><span class="t" style="left:349.66px;top:79.84px;font-size:10.7px;line-height:10.7px;color:#eceae9;letter-spacing:0.004px;">Yläraajananatomia_...</span><span class="t" style="left:510.16px;top:79.84px;font-size:10.7px;line-height:10.7px;color:#eceae9;letter-spacing:0.078px;">Dashboard |...</span><span class="t" style="left:630.87px;top:79.84px;font-size:10.7px;line-height:10.7px;color:#eceae9;letter-spacing:0.178px;">Mail - Sharm...</span><span class="t" style="left:751.47px;top:79.84px;font-size:10.7px;line-height:10.7px;color:#eceae9;letter-spacing:0.138px;">Keskustelu |...</span><span class="t" style="left:872.07px;top:79.84px;font-size:10.7px;line-height:10.7px;color:#eceae9;letter-spacing:0.097px;">Etusivu – Go...</span><span class="t" style="left:992.26px;top:79.84px;font-size:10.7px;line-height:10.7px;color:#eceae9;letter-spacing:0.208px;">lesgo active...</span><span class="t" style="left:1113.87px;top:79.84px;font-size:10.7px;line-height:10.7px;color:#eceae9;letter-spacing:0.086px;">Generate AI...</span><svg style="left:0;top:0" width="1200" height="102" viewBox="0 0 1200 102"><rect x="210" y="78" width="14" height="13.400" rx="3" fill="#7be0bf"/><circle cx="339.300" cy="84.900" r="6.600" fill="#e8502f"/><path d="M339.300 78.300a6.600 6.600 0 0 1 6.600 6.600h-6.600z" fill="#f6a27f"/><path d="M339.300 84.900h6.600a6.600 6.600 0 0 1-1.500 4.200h-5.100z" fill="#f2714b"/><rect x="332.300" y="81.300" width="7" height="7" rx="1" fill="#c43e1c"/><path d="M496.500 82.600v6.700" stroke="#f58220" stroke-width="1.700"/><circle cx="496.500" cy="80.400" r="0.900" fill="#f58220"/><path d="M500.200 89.300v-4.200a2.600 2.600 0 0 1 5.200 0v4.200" fill="none" stroke="#f58220" stroke-width="1.800"/><rect x="492.400" y="81" width="2" height="2" fill="#8a5a30" opacity="0.700"/><path d="M614.500 83.500l6.500-5 6.500 5v7h-13z" fill="#1a7fe0"/><path d="M616.500 80.500h9l1 6.500h-11z" fill="#7fd0ff"/><path d="M614.500 84l6.500 4 6.500-4v6.400a1 1 0 0 1-1 1h-11a1 1 0 0 1-1-1z" fill="#2a8cf0"/><rect x="613.400" y="85.600" width="6" height="5.600" rx="1.200" fill="#0f5fc0"/><circle cx="616.400" cy="88.400" r="1.400" fill="none" stroke="#fff" stroke-width="0.800"/><defs><linearGradient id="cop" x1="0" y1="0" x2="1" y2="1"><stop offset="0" stop-color="#3aa0f8"/><stop offset="0.35" stop-color="#a060e8"/><stop offset="0.65" stop-color="#f06080"/><stop offset="1" stop-color="#f8c040"/></linearGradient></defs><path d="M739 78.500h5.500c1.600 0 2.700 0.900 3 2.400l1 5c0.400 2-0.800 3.600-3 3.600h-5.500c-1.600 0-2.700-0.900-3-2.400l-1-5c-0.400-2 0.800-3.600 3-3.600z" fill="url(#cop)"/><path d="M736 82l3-3.500h3l-2 8-3 1.500z" fill="#38b0f0" opacity="0.800"/><path d="M745 81l3 5-2 3.500h-3z" fill="#f8b030" opacity="0.800"/><g transform="translate(856 79.300) scale(0.0705)"><path d="M0 125l26 45h98l-26-45z" fill="#4285f4" transform="translate(0,-22)"/><path d="M50 0h50l75 126h-50z" fill="#fbbc04"/><path d="M50 0L0 103l25 45 75-130z" fill="#1ea362" transform="translate(0,0)"/><path d="M25 148h100l25-45H50z" fill="#4285f4"/></g><rect x="975.600" y="77.800" width="12.600" height="14" rx="2.400" fill="#4a8cf7"/><path d="M978.300 82.200h7.200M978.300 84.800h7.200M978.300 87.400h5" stroke="#fff" stroke-width="1.200"/><rect x="1096.600" y="77.600" width="14.400" height="14.400" rx="3.400" fill="#eef0ff"/><circle cx="1103.800" cy="84.500" r="5" fill="none" stroke="#4d5de8" stroke-width="2.600"/><path d="M1099.500 88.200l-1.600 2.900 3.600-1z" fill="#4d5de8"/></svg><span class="t" style="left:211.97px;top:81.71px;font-size:6.6px;line-height:6.6px;color:#0c4a3c;font-weight:700;letter-spacing:1.723px;">TE</span><span class="t" style="left:333.48px;top:81.98px;font-size:6.4px;line-height:6.4px;color:#fff;font-weight:700;">P</span><div style="left:181px;top:102.6px;width:1019px;height:620.4px;background:#f5f5f5"></div><div style="left:561.3px;top:109.4px;width:257.5px;height:25.6px;background:#fff;border-radius:4px;box-shadow:0 0.5px 1.500px rgba(0,0,0,0.22), 0 0 1px rgba(0,0,0,0.12)"></div><span class="t" style="left:267.63px;top:116.73px;font-size:11.3px;line-height:11.3px;color:#242424;letter-spacing:-0.179px;">Yläraajananatomia_Olkavarsi</span><span class="t" style="left:598.23px;top:116.73px;font-size:11.3px;line-height:11.3px;color:#616161;letter-spacing:-0.182px;">Haku</span><span class="t" style="left:1071.23px;top:116.73px;font-size:11.3px;line-height:11.3px;color:#242424;letter-spacing:-0.692px;">Sharmarke Hassan</span><span class="t" style="left:1173.37px;top:117.23px;font-size:10.6px;line-height:10.6px;color:#242424;letter-spacing:-0.859px;">SH</span><span class="t" style="left:197.60px;top:149.03px;font-size:11.9px;line-height:11.9px;color:#424242;letter-spacing:-0.183px;">Tiedosto</span><span class="t" style="left:258.80px;top:149.03px;font-size:11.9px;line-height:11.9px;color:#424242;letter-spacing:-0.119px;">Aloitus</span><span class="t" style="left:313.90px;top:149.03px;font-size:11.9px;line-height:11.9px;color:#424242;letter-spacing:-0.887px;">Lisää</span><span class="t" style="left:359.10px;top:149.03px;font-size:11.9px;line-height:11.9px;color:#424242;letter-spacing:-0.372px;">Piirrä</span><span class="t" style="left:406.00px;top:149.03px;font-size:11.9px;line-height:11.9px;color:#424242;letter-spacing:-0.703px;">Rakenne</span><span class="t" style="left:470.70px;top:149.03px;font-size:11.9px;line-height:11.9px;color:#424242;letter-spacing:-0.170px;">Siirtymät</span><span class="t" style="left:537.80px;top:149.03px;font-size:11.9px;line-height:11.9px;color:#424242;letter-spacing:-0.033px;">Animaatiot</span><span class="t" style="left:615.40px;top:149.03px;font-size:11.9px;line-height:11.9px;color:#424242;letter-spacing:-0.408px;">Diaesitys</span><span class="t" style="left:681.40px;top:149.03px;font-size:11.9px;line-height:11.9px;color:#424242;letter-spacing:-0.426px;">Tarkista</span><span class="t" style="left:740.20px;top:149.03px;font-size:11.9px;line-height:11.9px;color:#424242;letter-spacing:-0.193px;">Näytä</span><span class="t" style="left:789.40px;top:149.03px;font-size:11.9px;line-height:11.9px;color:#424242;letter-spacing:-0.045px;">Ohje</span><div style="left:915.5px;top:145.3px;width:78px;height:19.4px;background:#fff;border:1px solid #d4d4d4;box-sizing:border-box;border-radius:4px"></div><div style="left:1000.5px;top:145.3px;width:27.6px;height:19.4px;background:#fff;border:1px solid #d4d4d4;box-sizing:border-box;border-radius:4px"></div><div style="left:1035px;top:145.3px;width:46.8px;height:19.4px;background:#fff;border:1px solid #d4d4d4;box-sizing:border-box;border-radius:4px"></div><div style="left:1062px;top:146px;width:1px;height:18px;background:#d8d8d8"></div><div style="left:1088.8px;top:145.3px;width:40.7px;height:19.4px;background:#fff;border:1px solid #d4d4d4;box-sizing:border-box;border-radius:4px"></div><div style="left:1136px;top:145px;width:57.3px;height:19.6px;background:#c4401e;border-radius:4px"></div><svg style="left:0;top:0" width="1200" height="200" viewBox="0 0 1200 200"><circle cx="194.90" cy="116.90" r="1.25" fill="#1a1a1a"/><circle cx="199.85" cy="116.90" r="1.25" fill="#1a1a1a"/><circle cx="204.80" cy="116.90" r="1.25" fill="#1a1a1a"/><circle cx="194.90" cy="121.85" r="1.25" fill="#1a1a1a"/><circle cx="199.85" cy="121.85" r="1.25" fill="#1a1a1a"/><circle cx="204.80" cy="121.85" r="1.25" fill="#1a1a1a"/><circle cx="194.90" cy="126.80" r="1.25" fill="#1a1a1a"/><circle cx="199.85" cy="126.80" r="1.25" fill="#1a1a1a"/><circle cx="204.80" cy="126.80" r="1.25" fill="#1a1a1a"/><defs><linearGradient id="pp1" x1="0" y1="0" x2="1" y2="1"><stop offset="0" stop-color="#f9a050"/><stop offset="1" stop-color="#e2452c"/></linearGradient></defs><circle cx="238.900" cy="122.300" r="8" fill="#e8452c"/><path d="M238.900 114.300a8 8 0 0 1 8 8h-8z" fill="#f79a4a"/><path d="M238.900 122.300h8a8 8 0 0 1-3 6.200l-5-6.200z" fill="#f0603c"/><path d="M232 118.500a8 8 0 0 1 6.900-4.200v8z" fill="#e03a4a"/><rect x="231" y="119.200" width="7.300" height="7.300" rx="1.200" fill="#c2282d"/><path d="M426.100 116.300c1.600 1.100 3.400 1.600 5.300 1.700v4.600c0 3-2 4.900-5.300 6.100-3.300-1.200-5.300-3.100-5.300-6.100v-4.600c1.900-0.100 3.700-0.600 5.300-1.700z" fill="#eaa11a" stroke="#6b5216" stroke-width="0.700"/><g fill="none" stroke="#2b2b2b" stroke-width="1" stroke-linecap="round" stroke-linejoin="round"><path d="M452 116.600a1.900 1.900 0 0 1 2.800 2.700l-9.200 9.200-3.600 1 1-3.700z"/><path d="M442.300 116.300l13.400 13"/></g><circle cx="580.800" cy="121.300" r="3.600" fill="none" stroke="#555" stroke-width="1"/><path d="M583.500 124.100l3.300 3.300" stroke="#555" stroke-width="1.100" stroke-linecap="round"/><path d="M1048.77 121.45L1048.77 122.75L1047.08 123.58L1046.70 124.50L1047.30 126.29L1046.39 127.20L1044.60 126.60L1043.68 126.98L1042.85 128.67L1041.55 128.67L1040.72 126.98L1039.80 126.60L1038.01 127.20L1037.10 126.29L1037.70 124.50L1037.32 123.58L1035.63 122.75L1035.63 121.45L1037.32 120.62L1037.70 119.70L1037.10 117.91L1038.01 117.00L1039.80 117.60L1040.72 117.22L1041.55 115.53L1042.85 115.53L1043.68 117.22L1044.60 117.60L1046.39 117.00L1047.30 117.91L1046.70 119.70L1047.08 120.62Z" fill="none" stroke="#333" stroke-width="0.950" stroke-linejoin="round"/><circle cx="1042.200" cy="122.100" r="2.300" fill="none" stroke="#333" stroke-width="0.950"/><circle cx="1180.400" cy="122.100" r="13" fill="none" stroke="#3a3a3a" stroke-width="0.900"/><path d="M925 150.200h7.600c0.900 0 1.500 0.600 1.500 1.500v4.700c0 0.900-0.600 1.500-1.500 1.500h-4.400l-2.900 2.300v-2.300h-0.300c-0.900 0-1.500-0.600-1.500-1.500v-4.700c0-0.900 0.600-1.500 1.500-1.500z" fill="none" stroke="#2b2b2b" stroke-width="1" stroke-linecap="round" stroke-linejoin="round"/><path d="M1009.700 154.700h1.600c1 0 1.300-2.400 2.400-2.400 1.200 0 1.200 4.800 2.400 4.800 1 0 1.200-2.400 2.200-2.400h0.600" fill="none" stroke="#2b2b2b" stroke-width="1" stroke-linecap="round" stroke-linejoin="round" stroke-width="1.200"/><circle cx="1009.300" cy="154.700" r="1.200" fill="#2b2b2b"/><circle cx="1019.300" cy="154.700" r="1.200" fill="#2b2b2b"/><path d="M1043.400 149.400h10.200M1044.500 149.600v5.400h8v-5.400M1048.500 155.200v3.600M1046 159.400h5" fill="none" stroke="#2b2b2b" stroke-width="1" stroke-linecap="round" stroke-linejoin="round"/><path d="M1046.500 151.600h4" fill="none" stroke="#2b2b2b" stroke-width="1" stroke-linecap="round" stroke-linejoin="round"/><path d="M1068.300 153.700l2.800 2.800 2.800-2.800" fill="none" stroke="#2b2b2b" stroke-width="1" stroke-linecap="round" stroke-linejoin="round"/><g fill="none" stroke="#2b2b2b" stroke-width="1" stroke-linecap="round" stroke-linejoin="round"><path d="M1105.700 149.600a1.600 1.600 0 0 1 2.300 2.300l-7.600 7.600-3 0.800 0.800-3z"/><path d="M1097.500 149.400l11 10.800"/></g><path d="M1114.300 153.700l2.800 2.800 2.800-2.800" fill="none" stroke="#2b2b2b" stroke-width="1" stroke-linecap="round" stroke-linejoin="round"/><circle cx="1148" cy="152" r="1.900" fill="none" stroke="#fff" stroke-width="1" stroke-linecap="round" stroke-linejoin="round"/><circle cx="1153.200" cy="152.700" r="1.400" fill="none" stroke="#fff" stroke-width="1" stroke-linecap="round" stroke-linejoin="round"/><path d="M1144.800 157.300c0-1.300 0.700-1.800 1.600-1.800h3.200c0.900 0 1.600 0.500 1.600 1.800 0 1.600-1.400 2.300-3.200 2.300s-3.200-0.700-3.200-2.300z" fill="none" stroke="#fff" stroke-width="1" stroke-linecap="round" stroke-linejoin="round"/><path d="M1152.600 155.900h1.800c0.800 0 1.200 0.500 1.200 1.300 0 1.200-0.900 1.900-2.600 1.900" fill="none" stroke="#fff" stroke-width="1" stroke-linecap="round" stroke-linejoin="round"/><path d="M1177.900 153.700l3 3 3-3" fill="none" stroke="#fff" stroke-width="1" stroke-linecap="round" stroke-linejoin="round"/></svg><span class="t" style="left:232.38px;top:119.98px;font-size:6.4px;line-height:6.4px;color:#fff;font-weight:700;">P</span><span class="t" style="left:938.25px;top:149.47px;font-size:10.9px;line-height:10.9px;color:#242424;letter-spacing:-0.434px;">Kommentit</span><span class="t" style="left:1159.69px;top:149.97px;font-size:10.2px;line-height:10.2px;color:#fff;letter-spacing:-1.559px;">Jaa</span><span class="t" style="left:195.10px;top:177.74px;font-size:12px;line-height:12px;color:#242424;">9</span><span class="t" style="left:192.70px;top:276.84px;font-size:12px;line-height:12px;color:#242424;letter-spacing:-0.659px;">10</span><span class="t" style="left:193.80px;top:375.94px;font-size:12px;line-height:12px;color:#242424;letter-spacing:-1.869px;">11</span><span class="t" style="left:192.70px;top:474.94px;font-size:12px;line-height:12px;color:#242424;letter-spacing:-0.659px;">12</span><span class="t" style="left:192.70px;top:574.04px;font-size:12px;line-height:12px;color:#c4401e;letter-spacing:-0.659px;">13</span><span class="t" style="left:192.70px;top:673.04px;font-size:12px;line-height:12px;color:#242424;letter-spacing:-0.659px;">14</span><div style="left:211.2px;top:175.4px;width:143.0px;height:80.7px;background:#fff;border-radius:3px;box-shadow:0 0 0 0.700px #e3e3e3, 0 0.500px 1.500px rgba(0,0,0,0.12)"></div><div style="left:211.2px;top:274.5px;width:143.0px;height:80.7px;background:#fff;border-radius:3px;box-shadow:0 0 0 0.700px #e3e3e3, 0 0.500px 1.500px rgba(0,0,0,0.12)"></div><div style="left:211.2px;top:373.6px;width:143.0px;height:80.7px;background:#fff;border-radius:3px;box-shadow:0 0 0 0.700px #e3e3e3, 0 0.500px 1.500px rgba(0,0,0,0.12)"></div><div style="left:211.2px;top:472.6px;width:143.0px;height:80.7px;background:#fff;border-radius:3px;box-shadow:0 0 0 0.700px #e3e3e3, 0 0.500px 1.500px rgba(0,0,0,0.12)"></div><div style="left:209.2px;top:569.8000000000001px;width:147.0px;height:85.3px;background:#fff;border:2px solid #c4401e;box-sizing:border-box;border-radius:5px"></div><div style="left:211.2px;top:670.7px;width:143.0px;height:34px;background:#fff;border-radius:3px 3px 0 0;box-shadow:0 0 0 0.700px #e3e3e3, 0 0.500px 1.500px rgba(0,0,0,0.12)"></div><span class="t" style="left:238.61px;top:188.07px;font-size:6.3px;line-height:6.3px;color:#5a5a5a;letter-spacing:0.013px;">Olkanivelen liikelaajuudet</span><div style="left:225.5px;top:196.4px;width:117px;height:0.5px;background:#c4c4c4"></div><span class="t" style="left:227.32px;top:198.41px;font-size:10.8px;line-height:10.8px;color:#555;transform-origin:0 0;transform:scale(0.25);font-weight:700;">Liikesuunta</span><span class="t" style="left:284.12px;top:198.41px;font-size:10.8px;line-height:10.8px;color:#555;transform-origin:0 0;transform:scale(0.25);font-weight:700;">Normaali liikelaajuus</span><div style="left:226px;top:203.1px;width:113.5px;height:5.2px;background:#f9d9d1"></div><span class="t" style="left:227.32px;top:204.41px;font-size:10.8px;line-height:10.8px;color:#5e5e5e;transform-origin:0 0;transform:scale(0.25);font-weight:700;">Fleksio (sagittaalitaso)</span><span class="t" style="left:284.12px;top:204.41px;font-size:10.8px;line-height:10.8px;color:#5e5e5e;transform-origin:0 0;transform:scale(0.25);font-weight:700;">0-180°</span><span class="t" style="left:227.32px;top:209.81px;font-size:10.8px;line-height:10.8px;color:#5e5e5e;transform-origin:0 0;transform:scale(0.25);">Ekstensio (sagittaalitaso)</span><span class="t" style="left:284.12px;top:209.81px;font-size:10.8px;line-height:10.8px;color:#5e5e5e;transform-origin:0 0;transform:scale(0.25);">0-60°</span><div style="left:226px;top:213.9px;width:113.5px;height:5.2px;background:#f9d9d1"></div><span class="t" style="left:227.32px;top:215.21px;font-size:10.8px;line-height:10.8px;color:#5e5e5e;transform-origin:0 0;transform:scale(0.25);font-weight:700;">Abduktio (frontaalitaso)</span><span class="t" style="left:284.12px;top:215.21px;font-size:10.8px;line-height:10.8px;color:#5e5e5e;transform-origin:0 0;transform:scale(0.25);font-weight:700;">0-75°</span><span class="t" style="left:227.32px;top:220.61px;font-size:10.8px;line-height:10.8px;color:#5e5e5e;transform-origin:0 0;transform:scale(0.25);">Adduktio (frontaalitaso)</span><span class="t" style="left:284.12px;top:220.61px;font-size:10.8px;line-height:10.8px;color:#5e5e5e;transform-origin:0 0;transform:scale(0.25);">0-180°</span><div style="left:226px;top:224.7px;width:113.5px;height:5.2px;background:#f9d9d1"></div><span class="t" style="left:227.32px;top:226.01px;font-size:10.8px;line-height:10.8px;color:#5e5e5e;transform-origin:0 0;transform:scale(0.25);font-weight:700;">Abduktio (horisontaalitaso)</span><span class="t" style="left:284.12px;top:226.01px;font-size:10.8px;line-height:10.8px;color:#5e5e5e;transform-origin:0 0;transform:scale(0.25);font-weight:700;">0-135°</span><span class="t" style="left:227.32px;top:231.41px;font-size:10.8px;line-height:10.8px;color:#5e5e5e;transform-origin:0 0;transform:scale(0.25);">Adduktio (horisontaalitaso)</span><span class="t" style="left:284.12px;top:231.41px;font-size:10.8px;line-height:10.8px;color:#5e5e5e;transform-origin:0 0;transform:scale(0.25);">0-50°</span><div style="left:226px;top:235.5px;width:113.5px;height:5.2px;background:#f9d9d1"></div><span class="t" style="left:227.32px;top:236.81px;font-size:10.8px;line-height:10.8px;color:#5e5e5e;transform-origin:0 0;transform:scale(0.25);font-weight:700;">Sisärotaatio</span><span class="t" style="left:284.12px;top:236.81px;font-size:10.8px;line-height:10.8px;color:#5e5e5e;transform-origin:0 0;transform:scale(0.25);font-weight:700;">0-100°</span><span class="t" style="left:227.32px;top:242.21px;font-size:10.8px;line-height:10.8px;color:#5e5e5e;transform-origin:0 0;transform:scale(0.25);">Ulkorotaatio</span><span class="t" style="left:284.12px;top:242.21px;font-size:10.8px;line-height:10.8px;color:#5e5e5e;transform-origin:0 0;transform:scale(0.25);">0-90°</span><div style="left:226px;top:246.2px;width:113.5px;height:0.4px;background:#ccc"></div><div style="left:211.2px;top:250.3px;width:143.0px;height:5.8px;background:#9c2d20;border-radius:0 0 3px 3px;border-top:0.800px solid #d04a20;box-sizing:border-box"></div><span class="t" style="left:219.81px;top:284.40px;font-size:6.5px;line-height:6.5px;color:#5a5a5a;letter-spacing:-0.091px;">Olkanivelen nivelsiteet</span><span class="t" style="left:216.62px;top:292.08px;font-size:10.48px;line-height:10.48px;color:#505050;transform-origin:0 0;transform:scale(0.25);letter-spacing:0.165px;">• lig. glenohumerale superius = ylimmäinen pienpi nivelside (S</span><span class="t" style="left:217.92px;top:295.38px;font-size:10.48px;line-height:10.48px;color:#505050;transform-origin:0 0;transform:scale(0.25);letter-spacing:-0.029px;">superior glenohumeral ligament</span><span class="t" style="left:222.42px;top:298.88px;font-size:10.48px;line-height:10.48px;color:#505050;transform-origin:0 0;transform:scale(0.25);letter-spacing:0.094px;">O: Tuberculum infraclaviculare scapulae (itsestään pitkän</span><span class="t" style="left:222.42px;top:301.88px;font-size:10.96px;line-height:10.96px;color:#505050;transform-origin:0 0;transform:scale(0.25);">I: Tuberculum minus</span><span class="t" style="left:222.42px;top:305.28px;font-size:10.48px;line-height:10.48px;color:#505050;transform-origin:0 0;transform:scale(0.25);letter-spacing:0.162px;">Estää olkavarren ulkorotaatiota ja alaspäin suuntaut</span><span class="t" style="left:218.82px;top:313.18px;font-size:10.48px;line-height:10.48px;color:#505050;transform-origin:0 0;transform:scale(0.25);letter-spacing:-0.095px;">• lig.glenohumerale mediale = keskimmäinen lapaluu-olkaluusid</span><span class="t" style="left:220.22px;top:317.08px;font-size:10.48px;line-height:10.48px;color:#505050;transform-origin:0 0;transform:scale(0.25);letter-spacing:-0.328px;">(MGHL = medial glenohumeral ligament)</span><span class="t" style="left:223.52px;top:321.07px;font-size:10.56px;line-height:10.56px;color:#505050;transform-origin:0 0;transform:scale(0.25);letter-spacing:0.278px;">O: supraglenoidaali, glenoidaalinen</span><span class="t" style="left:223.52px;top:325.08px;font-size:10.48px;line-height:10.48px;color:#505050;transform-origin:0 0;transform:scale(0.25);letter-spacing:0.432px;">I: kiinnittyy subscapularis-jänteen kanssa</span><span class="t" style="left:222.42px;top:329.18px;font-size:10.48px;line-height:10.48px;color:#505050;transform-origin:0 0;transform:scale(0.25);letter-spacing:0.358px;">Estää etusiirtymistä ja rajoittaa ulkorotaatiota 45° asteen a</span><span class="t" style="left:261.52px;top:336.68px;font-size:10.48px;line-height:10.48px;color:#505050;transform-origin:0 0;transform:scale(0.25);letter-spacing:0.135px;">• lig. Glenohumerale inferius = alimmainen pienpi nivelside (IGHL =</span><span class="t" style="left:261.52px;top:339.78px;font-size:10.48px;line-height:10.48px;color:#505050;transform-origin:0 0;transform:scale(0.25);letter-spacing:-0.113px;">glenohumeral ligament)</span><span class="t" style="left:264.22px;top:343.08px;font-size:10.48px;line-height:10.48px;color:#505050;transform-origin:0 0;transform:scale(0.25);letter-spacing:0.215px;">O: glenoid labrumi</span><span class="t" style="left:264.22px;top:346.18px;font-size:10.48px;line-height:10.48px;color:#505050;transform-origin:0 0;transform:scale(0.25);letter-spacing:0.176px;">I: kiinnittyy collum anatomicum humerin alaosaan, estää etu- ja t</span><span class="t" style="left:264.22px;top:347.88px;font-size:10.48px;line-height:10.48px;color:#505050;transform-origin:0 0;transform:scale(0.25);letter-spacing:0.414px;">sekä rotaatiota, tärkein stabiloija 90° abduktiossa j</span><svg style="left:297px;top:282.5px;" width="50" height="50" viewBox="0 0 50 50"><path d="M27 5c2-4 9-4 12-1 3 2 4 6 2 9l3 8c1 8 0 18 1 28h-6c-2-7-5-12-9-16l-3 1c-3 4-4 9-4 15h-7c0-8 0-17-3-24-2-5-1-10 3-12 3-2 7-2 9-4z" fill="#e6c58f"/><path d="M12 10c6-4 16-3 21 2 4 5 4 13 0 18-4 4-12 5-17 2-6-4-9-16-4-22z" fill="#d7e1ec"/><path d="M14 14c5-3 12-2 16 1M16 24c4 3 9 3 13 0M22 12l4 14" stroke="#a9bbcf" stroke-width="1.200" fill="none"/><path d="M28 4c3-2 8-2 10 1-1 3-6 4-10 3z" fill="#f0d5a0"/><path d="M8 32c1 8 2 14 2 17h6c0-6 1-11 3-15z" fill="#dbb67c"/></svg><span class="t" style="left:218.41px;top:381.70px;font-size:6.5px;line-height:6.5px;color:#5a5a5a;letter-spacing:-0.077px;">Olkanivelen nivelsiteet</span><span class="t" style="left:218.02px;top:391.78px;font-size:10.48px;line-height:10.48px;color:#505050;transform-origin:0 0;transform:scale(0.25);letter-spacing:0.424px;">• lig. Coracoclaviculare</span><span class="t" style="left:218.82px;top:394.68px;font-size:10.48px;line-height:10.48px;color:#505050;transform-origin:0 0;transform:scale(0.25);letter-spacing:0.288px;">korppilisäke-solisluuside (C</span><span class="t" style="left:218.81px;top:397.35px;font-size:11.6px;line-height:11.6px;color:#505050;transform-origin:0 0;transform:scale(0.25);letter-spacing:0.803px;">Coracoclavicular ligament)</span><span class="t" style="left:223.02px;top:401.48px;font-size:10.48px;line-height:10.48px;color:#505050;transform-origin:0 0;transform:scale(0.25);letter-spacing:-0.101px;">O: Processus coracoide</span><span class="t" style="left:223.02px;top:405.08px;font-size:10.48px;line-height:10.48px;color:#505050;transform-origin:0 0;transform:scale(0.25);letter-spacing:0.768px;">I: Clavicula lat. p</span><span class="t" style="left:219.32px;top:415.98px;font-size:10.48px;line-height:10.48px;color:#505050;transform-origin:0 0;transform:scale(0.25);letter-spacing:0.139px;">• lig. Coracoacromiale =</span><span class="t" style="left:221.22px;top:419.08px;font-size:10.48px;line-height:10.48px;color:#505050;transform-origin:0 0;transform:scale(0.25);letter-spacing:0.276px;">korppilisäke-olkalisäkesid</span><span class="t" style="left:221.21px;top:421.95px;font-size:11.6px;line-height:11.6px;color:#505050;transform-origin:0 0;transform:scale(0.25);letter-spacing:0.913px;">Coracoacromial ligament)</span><span class="t" style="left:223.92px;top:426.08px;font-size:10.48px;line-height:10.48px;color:#505050;transform-origin:0 0;transform:scale(0.25);letter-spacing:-0.080px;">O: Processus coracoideus lateraa</span><span class="t" style="left:223.91px;top:428.15px;font-size:11.6px;line-height:11.6px;color:#505050;transform-origin:0 0;transform:scale(0.25);letter-spacing:-0.174px;">reun</span><span class="t" style="left:223.92px;top:431.78px;font-size:10.48px;line-height:10.48px;color:#505050;transform-origin:0 0;transform:scale(0.25);letter-spacing:0.426px;">I: Acromionin anteriori</span><span class="t" style="left:223.92px;top:434.41px;font-size:10.8px;line-height:10.8px;color:#505050;transform-origin:0 0;transform:scale(0.25);letter-spacing:0.215px;">pinta. Estää olkaluun pään</span><span class="t" style="left:223.92px;top:437.08px;font-size:10.48px;line-height:10.48px;color:#505050;transform-origin:0 0;transform:scale(0.25);letter-spacing:0.382px;">siirtymistä ylöspäin ja suo</span><span class="t" style="left:223.92px;top:439.78px;font-size:10.48px;line-height:10.48px;color:#505050;transform-origin:0 0;transform:scale(0.25);letter-spacing:0.053px;">supraspinatus-jännettä</span><span class="t" style="left:271.62px;top:430.98px;font-size:10.48px;line-height:10.48px;color:#505050;transform-origin:0 0;transform:scale(0.25);letter-spacing:0.143px;">• lig. coracohumerale = korppilisäke-olkaluuside (CH</span><span class="t" style="left:273.81px;top:434.45px;font-size:11.6px;line-height:11.6px;color:#505050;transform-origin:0 0;transform:scale(0.25);letter-spacing:2.715px;">Coracohumeral ligament)</span><span class="t" style="left:276.52px;top:438.88px;font-size:10.48px;line-height:10.48px;color:#505050;transform-origin:0 0;transform:scale(0.25);letter-spacing:-0.006px;">O: Processus coracoideus lateral</span><span class="t" style="left:276.52px;top:442.78px;font-size:10.96px;line-height:10.96px;color:#505050;transform-origin:0 0;transform:scale(0.25);letter-spacing:-0.130px;">I: Humeru</span><svg style="left:272px;top:383.6px;" width="80" height="46" viewBox="0 0 80 46"><g stroke="#bbb" stroke-width="0.400"><path d="M16 7.500h13M5 12h24M7 17h18M2 26h22"/></g><path d="M30 9c4-5 14-7 22-4 5 2 7 6 6 10l4 9c2 6 1 12 0 17l-5 1c-1-5-3-9-7-12l-4 13h-6l-1-12c-5-2-9-6-10-11-1-4 0-8 1-11z" fill="#ecd9a2"/><path d="M31 12c4-4 10-5 16-3 4 2 6 5 5 9-2 5-8 7-13 6-5-2-9-6-8-12z" fill="#c9d5de"/><path d="M30 8c6-3 16-4 24-1l-2 4c-6-2-13-2-20 1z" fill="#e2c070"/><path d="M40 22l-2 18h5l3-16z" fill="#e9e2cf"/><path d="M33 14c5 2 11 2 16-1M36 19c3 1 8 1 11-1" stroke="#90a4b4" stroke-width="0.900" fill="none"/><path d="M52 14l8 16-3 10-4-12z" fill="#e6c880"/><g stroke="#e9a0a0" stroke-width="0.500" fill="none"><rect x="68" y="9" width="5" height="6"/><path d="M62 8.500h4M62 12h4M62 15h4"/></g></svg><div style="left:211.2px;top:448.5px;width:143.0px;height:5.8px;background:#9c2d20;border-radius:0 0 3px 3px;border-top:0.800px solid #d04a20;box-sizing:border-box"></div><span class="t" style="left:235.80px;top:478.73px;font-size:6.7px;line-height:6.7px;color:#5a5a5a;letter-spacing:-0.143px;">Lapaluuta liikuttavat lihakset</span><span class="t" style="left:281.69px;top:497.54px;font-size:14.0px;line-height:14.0px;color:#222;transform-origin:0 0;transform:scale(0.25);letter-spacing:0.394px;">- M. Trapezius = epäkäslihas</span><span class="t" style="left:281.69px;top:504.54px;font-size:14.0px;line-height:14.0px;color:#222;transform-origin:0 0;transform:scale(0.25);letter-spacing:0.674px;">- M. Rhomboideus major &amp; minor = iso ja</span><span class="t" style="left:284.09px;top:509.84px;font-size:14.0px;line-height:14.0px;color:#222;transform-origin:0 0;transform:scale(0.25);letter-spacing:1.049px;">pieni suunnikaslihas</span><span class="t" style="left:282.50px;top:516.84px;font-size:14.0px;line-height:14.0px;color:#222;transform-origin:0 0;transform:scale(0.25);letter-spacing:0.581px;">- M. levator scapulae = lapaluun</span><span class="t" style="left:284.09px;top:522.34px;font-size:14.0px;line-height:14.0px;color:#222;transform-origin:0 0;transform:scale(0.25);letter-spacing:0.863px;">kohottajalihas</span><span class="t" style="left:282.50px;top:529.24px;font-size:14.0px;line-height:14.0px;color:#222;transform-origin:0 0;transform:scale(0.25);letter-spacing:0.762px;">- M. serratus anterior = etummainen</span><span class="t" style="left:284.09px;top:534.54px;font-size:14.0px;line-height:14.0px;color:#222;transform-origin:0 0;transform:scale(0.25);letter-spacing:0.460px;">sahalihas</span><svg style="left:213.5px;top:489.1px;" width="66" height="60" viewBox="0 0 66 60"><path d="M22 2h16l-1 7c8 2 15 6 21 11 4 5 5 12 5 20l-5 14-6-8-5 12H18l-5-12-5 9-6-15c0-9 2-16 7-21 5-4 10-7 15-9z" fill="#e9d6a8"/><path d="M24 6l6 2 5-2 2 10c7 3 13 7 16 13l-6 18-8 8-9-3-9 3-8-9-5-17c3-6 8-10 15-13z" fill="#d6594a"/><path d="M29 4h3v46h-3z" fill="#b9d0da"/><path d="M20 40c3 5 6 9 10 11 4-2 7-6 10-11l-2 14H22z" fill="#f0e2b4"/><path d="M22 44h16M22 48h16M23 52h14" stroke="#c9a45c" stroke-width="0.800"/><path d="M44 14c6 0 11 4 13 9l-8 6-7-6z" fill="#f1cf7a"/><path d="M5 30l6-4 3 16-5 10zM58 30l-6-4-3 16 5 12z" fill="#e0705c"/><path d="M12 20l12-6 4 12-8 12-8-6z" fill="#e26b58"/><path d="M36 10l5 3-3 16-6 6z" fill="#c9493c"/><g fill="none" stroke="#d9a0a0" stroke-width="0.500"><ellipse cx="42" cy="9" rx="3" ry="2"/><ellipse cx="47" cy="13" rx="3" ry="2"/><ellipse cx="52" cy="16" rx="3" ry="2"/><ellipse cx="12" cy="56" rx="3" ry="2"/></g></svg><div style="left:211.2px;top:547.5000000000001px;width:143.0px;height:5.8px;background:#9c2d20;border-radius:0 0 3px 3px;border-top:0.800px solid #d04a20;box-sizing:border-box"></div><span class="t" style="left:242.60px;top:578.73px;font-size:6.7px;line-height:6.7px;color:#5a5a5a;letter-spacing:-0.167px;">Lapaluuta liikuttavat lihakset</span><div style="left:216.1px;top:586.6px;width:133.50000000000003px;height:4.2000000000000455px;background:#f4b49d"></div><div style="left:216.1px;top:590.8000000000001px;width:133.50000000000003px;height:17.199999999999932px;background:#f2f2f2"></div><div style="left:216.1px;top:608.0px;width:133.50000000000003px;height:10.900000000000091px;background:#f4b49d"></div><div style="left:216.1px;top:618.9000000000001px;width:133.50000000000003px;height:10.799999999999955px;background:#f2f2f2"></div><div style="left:216.1px;top:629.7px;width:133.50000000000003px;height:14.100000000000023px;background:#f4b49d"></div><div style="left:215.95px;top:586.6px;width:0.35px;height:57.200000000000045px;background:rgba(70,45,38,0.42)"></div><div style="left:249.25px;top:586.6px;width:0.35px;height:57.200000000000045px;background:rgba(70,45,38,0.42)"></div><div style="left:282.45000000000005px;top:586.6px;width:0.35px;height:57.200000000000045px;background:rgba(70,45,38,0.42)"></div><div style="left:316.05px;top:586.6px;width:0.35px;height:57.200000000000045px;background:rgba(70,45,38,0.42)"></div><div style="left:349.45000000000005px;top:586.6px;width:0.35px;height:57.200000000000045px;background:rgba(70,45,38,0.42)"></div><div style="left:216.1px;top:586.45px;width:133.50000000000003px;height:0.35px;background:rgba(70,45,38,0.42)"></div><div style="left:216.1px;top:590.6500000000001px;width:133.50000000000003px;height:0.35px;background:rgba(70,45,38,0.42)"></div><div style="left:216.1px;top:607.85px;width:133.50000000000003px;height:0.35px;background:rgba(70,45,38,0.42)"></div><div style="left:216.1px;top:618.7500000000001px;width:133.50000000000003px;height:0.35px;background:rgba(70,45,38,0.42)"></div><div style="left:216.1px;top:629.5500000000001px;width:133.50000000000003px;height:0.35px;background:rgba(70,45,38,0.42)"></div><div style="left:216.1px;top:643.6500000000001px;width:133.50000000000003px;height:0.35px;background:rgba(70,45,38,0.42)"></div><span class="t" style="left:217.22px;top:587.60px;font-size:10.4px;line-height:10.4px;color:#4a4a4a;transform-origin:0 0;transform:scale(0.25);font-weight:700;">Nimi</span><span class="t" style="left:250.52px;top:587.60px;font-size:10.4px;line-height:10.4px;color:#4a4a4a;transform-origin:0 0;transform:scale(0.25);font-weight:700;">Origo</span><span class="t" style="left:283.72px;top:587.60px;font-size:10.4px;line-height:10.4px;color:#4a4a4a;transform-origin:0 0;transform:scale(0.25);font-weight:700;">Insertio</span><span class="t" style="left:317.32px;top:587.60px;font-size:10.4px;line-height:10.4px;color:#4a4a4a;transform-origin:0 0;transform:scale(0.25);font-weight:700;">Funktio</span><span class="t" style="left:217.23px;top:591.77px;font-size:9.6px;line-height:9.6px;color:#4a4a4a;transform-origin:0 0;transform:scale(0.25);">m. Levator scapulae</span><span class="t" style="left:250.53px;top:591.77px;font-size:9.6px;line-height:9.6px;color:#4a4a4a;transform-origin:0 0;transform:scale(0.25);">C1-4 proc. Transversukset</span><span class="t" style="left:283.73px;top:591.77px;font-size:9.6px;line-height:9.6px;color:#4a4a4a;transform-origin:0 0;transform:scale(0.25);">Margo medialis scapulae,</span><span class="t" style="left:283.73px;top:595.02px;font-size:9.6px;line-height:9.6px;color:#4a4a4a;transform-origin:0 0;transform:scale(0.25);">spina scapulaen yläosan ja</span><span class="t" style="left:283.73px;top:598.27px;font-size:9.6px;line-height:9.6px;color:#4a4a4a;transform-origin:0 0;transform:scale(0.25);">angulus superiorin väli</span><span class="t" style="left:317.33px;top:591.77px;font-size:9.6px;line-height:9.6px;color:#4a4a4a;transform-origin:0 0;transform:scale(0.25);">Scapulan elevaatio,</span><span class="t" style="left:317.33px;top:595.02px;font-size:9.6px;line-height:9.6px;color:#4a4a4a;transform-origin:0 0;transform:scale(0.25);">alaskiertyminen,</span><span class="t" style="left:317.33px;top:598.27px;font-size:9.6px;line-height:9.6px;color:#4a4a4a;transform-origin:0 0;transform:scale(0.25);">lateraalifleksio, rotaatio.</span><span class="t" style="left:317.33px;top:601.52px;font-size:9.6px;line-height:9.6px;color:#4a4a4a;transform-origin:0 0;transform:scale(0.25);">Pään ja kaulan ekstentio</span><span class="t" style="left:317.33px;top:604.77px;font-size:9.6px;line-height:9.6px;color:#4a4a4a;transform-origin:0 0;transform:scale(0.25);">(bilateraalisesti)</span><span class="t" style="left:217.23px;top:608.97px;font-size:9.6px;line-height:9.6px;color:#4a4a4a;transform-origin:0 0;transform:scale(0.25);">m. Rhomboideus major</span><span class="t" style="left:250.53px;top:608.97px;font-size:9.6px;line-height:9.6px;color:#4a4a4a;transform-origin:0 0;transform:scale(0.25);">Th2-5 proc. Spinosukset</span><span class="t" style="left:283.73px;top:608.97px;font-size:9.6px;line-height:9.6px;color:#4a4a4a;transform-origin:0 0;transform:scale(0.25);">Scapulan margo medialis</span><span class="t" style="left:283.73px;top:612.22px;font-size:9.6px;line-height:9.6px;color:#4a4a4a;transform-origin:0 0;transform:scale(0.25);">spina scapulaen ja angulus</span><span class="t" style="left:283.73px;top:615.47px;font-size:9.6px;line-height:9.6px;color:#4a4a4a;transform-origin:0 0;transform:scale(0.25);">inferiorin välissä</span><span class="t" style="left:317.33px;top:608.97px;font-size:9.6px;line-height:9.6px;color:#4a4a4a;transform-origin:0 0;transform:scale(0.25);">Scapulan retraktio, elevaatio</span><span class="t" style="left:317.33px;top:612.22px;font-size:9.6px;line-height:9.6px;color:#4a4a4a;transform-origin:0 0;transform:scale(0.25);">ja alaskiertyminen</span><span class="t" style="left:217.23px;top:619.87px;font-size:9.6px;line-height:9.6px;color:#4a4a4a;transform-origin:0 0;transform:scale(0.25);">m. Rhomboideus minor</span><span class="t" style="left:250.53px;top:619.87px;font-size:9.6px;line-height:9.6px;color:#4a4a4a;transform-origin:0 0;transform:scale(0.25);">C7-Th1 proc. Spinosukset</span><span class="t" style="left:283.73px;top:619.87px;font-size:9.6px;line-height:9.6px;color:#4a4a4a;transform-origin:0 0;transform:scale(0.25);">Scapulan margo medialiksen</span><span class="t" style="left:283.73px;top:623.12px;font-size:9.6px;line-height:9.6px;color:#4a4a4a;transform-origin:0 0;transform:scale(0.25);">yläosa, spina scapulaesta</span><span class="t" style="left:283.73px;top:626.37px;font-size:9.6px;line-height:9.6px;color:#4a4a4a;transform-origin:0 0;transform:scale(0.25);">ylöspäin</span><span class="t" style="left:317.33px;top:619.87px;font-size:9.6px;line-height:9.6px;color:#4a4a4a;transform-origin:0 0;transform:scale(0.25);">Samat kuin yllä</span><span class="t" style="left:217.23px;top:630.67px;font-size:9.6px;line-height:9.6px;color:#4a4a4a;transform-origin:0 0;transform:scale(0.25);">m. Serratus anterior</span><span class="t" style="left:250.53px;top:630.67px;font-size:9.6px;line-height:9.6px;color:#4a4a4a;transform-origin:0 0;transform:scale(0.25);">1. – 9. kylkiluiden</span><span class="t" style="left:250.53px;top:633.92px;font-size:9.6px;line-height:9.6px;color:#4a4a4a;transform-origin:0 0;transform:scale(0.25);">anterolateraaliset pinnat</span><span class="t" style="left:283.73px;top:630.67px;font-size:9.6px;line-height:9.6px;color:#4a4a4a;transform-origin:0 0;transform:scale(0.25);">Scapulan margo medialiksen</span><span class="t" style="left:283.73px;top:633.92px;font-size:9.6px;line-height:9.6px;color:#4a4a4a;transform-origin:0 0;transform:scale(0.25);">anteriorinen pinta</span><span class="t" style="left:317.33px;top:630.67px;font-size:9.6px;line-height:9.6px;color:#4a4a4a;transform-origin:0 0;transform:scale(0.25);">Lapaluun protraktio,</span><span class="t" style="left:317.33px;top:633.92px;font-size:9.6px;line-height:9.6px;color:#4a4a4a;transform-origin:0 0;transform:scale(0.25);">ylöskiertyminen, depressio.</span><span class="t" style="left:317.33px;top:637.17px;font-size:9.6px;line-height:9.6px;color:#4a4a4a;transform-origin:0 0;transform:scale(0.25);">Margo medialiksen</span><span class="t" style="left:317.33px;top:640.42px;font-size:9.6px;line-height:9.6px;color:#4a4a4a;transform-origin:0 0;transform:scale(0.25);">stabilointi rintakehään</span><div style="left:211.2px;top:647.7px;width:143.0px;height:4.9px;background:#9c2d20"></div><div style="left:211.2px;top:647.7px;width:143.0px;height:0.8px;background:#d04a20"></div><span class="t" style="left:237.30px;top:676.93px;font-size:6.7px;line-height:6.7px;color:#5a5a5a;letter-spacing:-0.153px;">Olkaniveltä liikuttavat lihakset</span><div style="left:224px;top:685.3000000000001px;width:39px;height:19.4px;background:#fbe0d6;border:0.600px solid #e08868;border-bottom:none;box-sizing:border-box"></div><div style="left:225.2px;top:686.7px;width:36.6px;height:4.6px;background:#f8cdbd"></div><span class="t" style="left:226.52px;top:687.81px;font-size:10.8px;line-height:10.8px;color:#7a3a2a;transform-origin:0 0;transform:scale(0.25);">M. supraspinatus</span><div style="left:225.2px;top:692.1px;width:36.6px;height:4.6px;background:#f8cdbd"></div><span class="t" style="left:226.52px;top:693.21px;font-size:10.8px;line-height:10.8px;color:#7a3a2a;transform-origin:0 0;transform:scale(0.25);">M. infraspinatus</span><div style="left:225.2px;top:697.5px;width:36.6px;height:4.6px;background:#f8cdbd"></div><span class="t" style="left:226.52px;top:698.61px;font-size:10.8px;line-height:10.8px;color:#7a3a2a;transform-origin:0 0;transform:scale(0.25);">M. teres minor</span><div style="left:264.5px;top:685.5px;width:5px;height:19.2px;border:0.600px solid #d06a4a;border-left:none;border-bottom:none;box-sizing:border-box"></div><div style="left:269.5px;top:696.2px;width:3.6px;height:0.6px;background:#d06a4a"></div><span class="t" style="left:278.90px;top:686.91px;font-size:13.2px;line-height:13.2px;color:#222;transform-origin:0 0;transform:scale(0.25);letter-spacing:-0.055px;">Kiertäjäkalvosin =</span><span class="t" style="left:278.90px;top:691.51px;font-size:13.2px;line-height:13.2px;color:#222;transform-origin:0 0;transform:scale(0.25);letter-spacing:0.115px;">"Rotator cuff"</span><span class="t" style="left:278.90px;top:699.41px;font-size:13.2px;line-height:13.2px;color:#222;transform-origin:0 0;transform:scale(0.25);letter-spacing:0.237px;">Erityisesti</span><div style="left:378.9px;top:328.3px;width:3.8px;height:85.3px;background:#7a7a7a;border-radius:1.900px"></div><div style="left:388px;top:171.5px;width:1px;height:531px;background:#dcdcdc"></div><div style="left:389px;top:191px;width:811px;height:512px;background:#f8f8f8"></div><div style="left:181px;top:703px;width:1019px;height:20px;background:#f5f5f5;border-top:1px solid #e4e4e4;box-sizing:border-box"></div><div style="left:396.2px;top:191.3px;width:810px;height:485px;background:#fff;box-shadow:0 1px 4px rgba(0,0,0,0.25)"></div><div style="left:396.2px;top:639.7px;width:810px;height:36.5px;background:#9c2d20"></div><div style="left:396.2px;top:639.7px;width:810px;height:4.6px;background:#d8491d"></div><span class="t" style="left:400.08px;top:662.59px;font-size:8.4px;line-height:8.4px;color:#7c2019;letter-spacing:0.118px;">LUT Group Confidential - Other information (3Y)</span><div style="left:388.3px;top:181.2px;width:20.5px;height:23px;background:#f5f5f5;border:1px solid #dedede;border-left:none;box-sizing:border-box;border-radius:0 4px 4px 0"></div><svg style="left:390px;top:186px;" width="16" height="12" viewBox="0 0 16 12"><rect x="0.600" y="1.100" width="12.400" height="9.200" rx="1.200" fill="none" stroke="#444" stroke-width="0.900"/><path d="M4.200 1.100v9.200" stroke="#444" stroke-width="0.900"/><path d="M11.200 5.700H6.400M8.200 3.900L6.400 5.700l1.800 1.800" fill="none" stroke="#444" stroke-width="0.900"/></svg><div style="left:398px;top:249px;width:20px;height:20px;background:#fff;border:1px solid #d8d8d8;box-sizing:border-box;border-radius:50%"></div><svg style="left:402px;top:253px;" width="12" height="12" viewBox="0 0 12 12"><g fill="none" stroke="#a8a8a8" stroke-width="0.800" stroke-linecap="round" stroke-linejoin="round"><path d="M6 1.500v3M6 7.500v3M1.500 6h3M7.500 6h3"/><path d="M4.800 2.700L6 1.500l1.200 1.200M4.800 9.300L6 10.500l1.200-1.200M2.700 4.800L1.500 6l1.200 1.200M9.300 4.800L10.500 6 9.300 7.200"/></g></svg><div style="left:1123px;top:264.3px;width:10.5px;height:1px;background:#9a9a9a"></div><span class="t" style="left:580.96px;top:229.02px;font-size:40.5px;line-height:40.5px;color:#333;letter-spacing:-1.543px;-webkit-text-stroke:0.850px #fff;">Lapaluuta</span><span class="t" style="left:754.46px;top:229.02px;font-size:40.5px;line-height:40.5px;color:#333;letter-spacing:-0.236px;-webkit-text-stroke:0.850px #fff;">liikuttavat</span><span class="t" style="left:927.46px;top:229.02px;font-size:40.5px;line-height:40.5px;color:#333;letter-spacing:-0.937px;-webkit-text-stroke:0.850px #fff;">lihakset</span><div style="left:1025.3px;top:262px;width:4.4px;height:4.4px;border:0.700px solid #8a8a8a;box-sizing:border-box;border-radius:50%;background:rgba(255,255,255,0.6)"></div><div class="sq" style="left:583.0px;top:271.3px;width:163.6px"></div><div class="sq" style="left:756.2px;top:271.3px;width:163.8px"></div><div class="sq" style="left:929.0px;top:271.3px;width:129.0px"></div><div style="left:425.5px;top:277px;width:774.5px;height:26.19999999999999px;background:#f4b29a"></div><div style="left:425.5px;top:303.2px;width:774.5px;height:104.30000000000001px;background:#f2f2f2"></div><div style="left:425.5px;top:407.5px;width:774.5px;height:64.5px;background:#f4b29a"></div><div style="left:425.5px;top:472px;width:774.5px;height:65px;background:#f2f2f2"></div><div style="left:425.5px;top:537px;width:774.5px;height:84.20000000000005px;background:#f4b29a"></div><div style="left:425.0px;top:276.5px;width:775.5px;height:1.1px;background:#1a1210"></div><div style="left:425.0px;top:302.7px;width:775.5px;height:1.1px;background:#1a1210"></div><div style="left:425.0px;top:407.0px;width:775.5px;height:1.1px;background:#1a1210"></div><div style="left:425.0px;top:471.5px;width:775.5px;height:1.1px;background:#1a1210"></div><div style="left:425.0px;top:536.5px;width:775.5px;height:1.1px;background:#1a1210"></div><div style="left:425.0px;top:620.7px;width:775.5px;height:1.1px;background:#1a1210"></div><div style="left:425.0px;top:276.5px;width:1.1px;height:345.20000000000005px;background:#1a1210"></div><div style="left:626.0px;top:276.5px;width:1.1px;height:345.20000000000005px;background:#1a1210"></div><div style="left:826.7px;top:276.5px;width:1.1px;height:345.20000000000005px;background:#1a1210"></div><div style="left:1027.1px;top:276.5px;width:1.1px;height:345.20000000000005px;background:#1a1210"></div><span class="t" style="left:431.77px;top:282.24px;font-size:14.6px;line-height:14.6px;color:#000;font-weight:700;letter-spacing:0.212px;">Nimi</span><span class="t" style="left:632.77px;top:282.24px;font-size:14.6px;line-height:14.6px;color:#000;font-weight:700;letter-spacing:-0.415px;"><u>Origo</u></span><span class="t" style="left:833.47px;top:282.24px;font-size:14.6px;line-height:14.6px;color:#000;font-weight:700;letter-spacing:-0.051px;"><u>Insertio</u></span><span class="t" style="left:1033.87px;top:282.24px;font-size:14.6px;line-height:14.6px;color:#000;font-weight:700;letter-spacing:-0.241px;"><u>Funktio</u></span><span class="t" style="left:431.77px;top:308.54px;font-size:14.6px;line-height:14.6px;color:#000;letter-spacing:-0.026px;-webkit-text-stroke:0.32px #000;">m. <u>Levator</u> scapulae</span><span class="t" style="left:431.77px;top:412.94px;font-size:14.6px;line-height:14.6px;color:#000;letter-spacing:0.189px;-webkit-text-stroke:0.32px #000;">m. Rhomboideus major</span><span class="t" style="left:431.77px;top:478.24px;font-size:14.6px;line-height:14.6px;color:#000;letter-spacing:0.199px;-webkit-text-stroke:0.32px #000;">m. Rhomboideus minor</span><span class="t" style="left:431.77px;top:542.74px;font-size:14.6px;line-height:14.6px;color:#000;letter-spacing:0.157px;-webkit-text-stroke:0.32px #000;">m. Serratus anterior</span><span class="t" style="left:632.77px;top:308.54px;font-size:14.6px;line-height:14.6px;color:#000;letter-spacing:-0.153px;-webkit-text-stroke:0.32px #000;">C1-4 proc. <u>Transversukset</u></span><span class="t" style="left:632.77px;top:412.94px;font-size:14.6px;line-height:14.6px;color:#000;letter-spacing:-0.047px;-webkit-text-stroke:0.32px #000;">Th2-5 proc. <u>Spinosukset</u></span><span class="t" style="left:632.77px;top:478.24px;font-size:14.6px;line-height:14.6px;color:#000;letter-spacing:-0.160px;-webkit-text-stroke:0.32px #000;">C7-Th1 proc. <u>Spinosukset</u></span><span class="t" style="left:632.77px;top:542.74px;font-size:14.6px;line-height:14.6px;color:#000;letter-spacing:0.123px;-webkit-text-stroke:0.32px #000;">1. – 9. <u>kylkiluiden</u></span><span class="t" style="left:632.77px;top:562.34px;font-size:14.6px;line-height:14.6px;color:#000;letter-spacing:0.249px;-webkit-text-stroke:0.32px #000;"><u>anterolateraaliset</u> <u>pinnat</u></span><span class="t" style="left:833.47px;top:308.54px;font-size:14.6px;line-height:14.6px;color:#000;letter-spacing:0.016px;-webkit-text-stroke:0.32px #000;">Margo medialis scapulae,</span><span class="t" style="left:833.47px;top:328.14px;font-size:14.6px;line-height:14.6px;color:#000;letter-spacing:-0.092px;-webkit-text-stroke:0.32px #000;">spina <u>scapulaen</u> <u>yläosan</u> ja</span><span class="t" style="left:833.47px;top:347.74px;font-size:14.6px;line-height:14.6px;color:#000;letter-spacing:0.120px;-webkit-text-stroke:0.32px #000;"><u>angulus</u> <u>superiorin</u> <u>väli</u></span><span class="t" style="left:833.47px;top:412.94px;font-size:14.6px;line-height:14.6px;color:#000;letter-spacing:-0.041px;-webkit-text-stroke:0.32px #000;"><u>Scapulan</u> <u>margo</u> <u>medialis</u></span><span class="t" style="left:833.47px;top:432.54px;font-size:14.6px;line-height:14.6px;color:#000;letter-spacing:-0.065px;-webkit-text-stroke:0.32px #000;">spina <u>scapulaen</u> ja <u>angulus</u></span><span class="t" style="left:833.47px;top:452.14px;font-size:14.6px;line-height:14.6px;color:#000;letter-spacing:0.119px;-webkit-text-stroke:0.32px #000;"><u>inferiorin</u> <u>välissä</u></span><span class="t" style="left:833.47px;top:478.24px;font-size:14.6px;line-height:14.6px;color:#000;letter-spacing:-0.033px;-webkit-text-stroke:0.32px #000;"><u>Scapulan</u> <u>margo</u> <u>medialiksen</u></span><span class="t" style="left:833.47px;top:497.84px;font-size:14.6px;line-height:14.6px;color:#000;letter-spacing:-0.149px;-webkit-text-stroke:0.32px #000;"><u>yläosa</u>, spina <u>scapulaesta</u></span><span class="t" style="left:833.47px;top:517.44px;font-size:14.6px;line-height:14.6px;color:#000;letter-spacing:0.159px;-webkit-text-stroke:0.32px #000;"><u>ylöspäin</u></span><span class="t" style="left:833.47px;top:542.74px;font-size:14.6px;line-height:14.6px;color:#000;letter-spacing:-0.033px;-webkit-text-stroke:0.32px #000;"><u>Scapulan</u> <u>margo</u> <u>medialiksen</u></span><span class="t" style="left:833.47px;top:562.34px;font-size:14.6px;line-height:14.6px;color:#000;letter-spacing:0.363px;-webkit-text-stroke:0.32px #000;"><u>anteriorinen</u> <u>pinta</u></span><span class="t" style="left:1033.87px;top:308.54px;font-size:14.6px;line-height:14.6px;color:#000;letter-spacing:-0.063px;-webkit-text-stroke:0.32px #000;"><u>Scapulan</u> <u>elevaatio</u>,</span><span class="t" style="left:1033.87px;top:328.14px;font-size:14.6px;line-height:14.6px;color:#000;letter-spacing:0.240px;-webkit-text-stroke:0.32px #000;"><u>alaskiertyminen</u>,</span><span class="t" style="left:1033.87px;top:347.74px;font-size:14.6px;line-height:14.6px;color:#000;letter-spacing:0.220px;-webkit-text-stroke:0.32px #000;"><u>lateraalifleksio</u>, <u>rotaatio</u>.</span><span class="t" style="left:1033.87px;top:367.34px;font-size:14.6px;line-height:14.6px;color:#000;letter-spacing:-0.016px;-webkit-text-stroke:0.32px #000;"><u>Pään</u> ja <u>kaulan</u> <u>ekstentio</u></span><span class="t" style="left:1033.87px;top:386.94px;font-size:14.6px;line-height:14.6px;color:#000;letter-spacing:0.127px;-webkit-text-stroke:0.32px #000;">(<u>bilateraalisesti</u>)</span><span class="t" style="left:1033.87px;top:412.94px;font-size:14.6px;line-height:14.6px;color:#000;letter-spacing:-0.013px;-webkit-text-stroke:0.32px #000;"><u>Scapulan</u> <u>retraktio</u>,</span><span class="t" style="left:1161.07px;top:412.94px;font-size:14.6px;line-height:14.6px;color:#000;letter-spacing:0.020px;-webkit-text-stroke:0.32px #000;"><u>elevaatio</u>,</span><span class="t" style="left:1033.87px;top:432.54px;font-size:14.6px;line-height:14.6px;color:#000;letter-spacing:0.197px;-webkit-text-stroke:0.32px #000;">ja <u>alaskiertyminen</u></span><span class="t" style="left:1033.87px;top:478.24px;font-size:14.6px;line-height:14.6px;color:#000;letter-spacing:-0.008px;-webkit-text-stroke:0.32px #000;"><u>Samat</u> <u>kuin</u> <u>yllä</u></span><span class="t" style="left:1033.87px;top:542.74px;font-size:14.6px;line-height:14.6px;color:#000;letter-spacing:0.214px;-webkit-text-stroke:0.32px #000;"><u>Lapaluun</u> <u>protraktio</u>,</span><span class="t" style="left:1033.87px;top:562.34px;font-size:14.6px;line-height:14.6px;color:#000;letter-spacing:0.256px;-webkit-text-stroke:0.32px #000;"><u>ylöskiertyminen</u>,</span><span class="t" style="left:1146.87px;top:562.34px;font-size:14.6px;line-height:14.6px;color:#000;letter-spacing:-0.220px;-webkit-text-stroke:0.32px #000;"><u>depressio</u>.</span><span class="t" style="left:1033.87px;top:581.94px;font-size:14.6px;line-height:14.6px;color:#000;letter-spacing:0.148px;-webkit-text-stroke:0.32px #000;"><u>Margo</u> <u>medialiksen</u></span><span class="t" style="left:1033.87px;top:601.54px;font-size:14.6px;line-height:14.6px;color:#000;letter-spacing:0.245px;-webkit-text-stroke:0.32px #000;"><u>stabilointi</u> <u>rintakehään</u></span><div style="left:394.3px;top:691.2px;width:737.5px;height:4.6px;background:#7b7b79;border-radius:2.300px"></div><span class="t" style="left:199.77px;top:710.33px;font-size:10.6px;line-height:10.6px;color:#616161;letter-spacing:-0.325px;">Dia 13/29</span><span class="t" style="left:255.07px;top:710.33px;font-size:10.6px;line-height:10.6px;color:#c4c4c4;letter-spacing:-0.326px;">suomi</span><span class="t" style="left:660.77px;top:710.33px;font-size:10.6px;line-height:10.6px;color:#616161;letter-spacing:-0.262px;">Anna palautetta Microsoftille</span><span class="t" style="left:804.97px;top:710.33px;font-size:10.6px;line-height:10.6px;color:#616161;letter-spacing:-0.155px;">Muistiinpanot</span><span class="t" style="left:1134.47px;top:710.33px;font-size:10.6px;line-height:10.6px;color:#616161;letter-spacing:-0.922px;">83%</span><div style="left:869.8px;top:705.3px;width:32px;height:17.5px;background:#e0e0e0;border:1px solid #c2c2c2;box-sizing:border-box;border-radius:3px 3px 0 0"></div><svg style="left:0;top:0" width="1200" height="730" viewBox="0 0 1200 730"><path d="M791.300 710.600h6.800c0.700 0 1.100 0.400 1.100 1.100v4.300l-3.600 3.600h-4.300c-0.700 0-1.100-0.400-1.100-1.100v-6.800c0-0.700 0.400-1.100 1.100-1.100zM799 716.200h-2.400c-0.600 0-0.900 0.300-0.900 0.900v2.400" fill="none" stroke="#555" stroke-width="0.950" stroke-linecap="round" stroke-linejoin="round"/><rect x="881" y="711.300" width="9.600" height="7.600" rx="1.200" fill="none" stroke="#555" stroke-width="0.950" stroke-linecap="round" stroke-linejoin="round"/><path d="M883.800 713.600h4.600M883.800 711.600v7" fill="none" stroke="#555" stroke-width="0.950" stroke-linecap="round" stroke-linejoin="round"/><rect x="913.3" y="710.6" width="3.800" height="3.800" rx="0.900" fill="none" stroke="#555" stroke-width="0.950" stroke-linecap="round" stroke-linejoin="round"/><rect x="918.6" y="710.6" width="3.800" height="3.800" rx="0.900" fill="none" stroke="#555" stroke-width="0.950" stroke-linecap="round" stroke-linejoin="round"/><rect x="913.3" y="716.0" width="3.800" height="3.800" rx="0.900" fill="none" stroke="#555" stroke-width="0.950" stroke-linecap="round" stroke-linejoin="round"/><rect x="918.6" y="716.0" width="3.800" height="3.800" rx="0.900" fill="none" stroke="#555" stroke-width="0.950" stroke-linecap="round" stroke-linejoin="round"/><path d="M945.600 710.800h9.600M946.600 711v4.800h7.600v-4.800M950.400 716v3.200M948.200 719.600h4.400" fill="none" stroke="#555" stroke-width="0.950" stroke-linecap="round" stroke-linejoin="round"/><path d="M948.600 713h3.600" fill="none" stroke="#555" stroke-width="0.950" stroke-linecap="round" stroke-linejoin="round"/><path d="M979 715.500h9.400" fill="none" stroke="#555" stroke-width="0.950" stroke-linecap="round" stroke-linejoin="round"/><path d="M1006.800 715.300h10" stroke="#c4401e" stroke-width="1.300"/><path d="M1026 715.300h66" stroke="#6e6e6e" stroke-width="1.200"/><circle cx="1022.500" cy="715.200" r="5.300" fill="#fafafa"/><circle cx="1022.500" cy="715.200" r="3.900" fill="#c4401e"/><path d="M1110 715.500h9.400M1114.700 710.800v9.400" fill="none" stroke="#555" stroke-width="0.950" stroke-linecap="round" stroke-linejoin="round"/><rect x="1171.900" y="713.400" width="3.800" height="4.400" rx="0.800" fill="none" stroke="#555" stroke-width="0.950" stroke-linecap="round" stroke-linejoin="round"/><path d="M1172.500 711.600l1.300-1.200 1.300 1.200M1172.500 719.600l1.300 1.200 1.300-1.200M1170 714.300l-1.200 1.300 1.200 1.300M1177.600 714.300l1.200 1.300-1.200 1.300" fill="none" stroke="#555" stroke-width="0.950" stroke-linecap="round" stroke-linejoin="round"/></svg></div></div><div style="left:28.3px;top:730.8px;width:1141.7px;height:45.2px;background:rgba(96,62,48,0.55);border-radius:12.500px;box-shadow:inset 0 0 0 0.800px rgba(255,235,220,0.22)"></div><svg style="left:35.0px;top:739.5px;" width="27.7" height="27.7" viewBox="0 0 100 100"><defs><linearGradient id="df1" x1="0" y1="0" x2="0" y2="1"><stop offset="0" stop-color="#28b4ff"/><stop offset="1" stop-color="#1287f0"/></linearGradient><linearGradient id="df2" x1="0" y1="0" x2="0" y2="1"><stop offset="0" stop-color="#f4f9ff"/><stop offset="1" stop-color="#b9dcff"/></linearGradient><clipPath id="dfc"><rect width="100" height="100" rx="23"/></clipPath></defs>
<g clip-path="url(#dfc)"><rect width="100" height="100" fill="url(#df1)"/><path d="M57 0H100V100H55C52 88 50 77 49.500 65H38C39 40 46 18 57 0Z" fill="url(#df2)"/>
<path d="M57 0C46 18 39 40 38 65H49.500C50 77 52 88 55 100" fill="none" stroke="#1a6fd0" stroke-width="2" opacity="0.500"/><path d="M20 66c17 14 43 14 60 0" fill="none" stroke="#0b3f94" stroke-width="4.500" stroke-linecap="round"/><path d="M28 30v11M70 30v11" stroke="#0b3f94" stroke-width="5" stroke-linecap="round"/></g></svg><svg style="left:70.68px;top:739.5px;" width="27.7" height="27.7" viewBox="0 0 100 100"><rect width="100" height="100" rx="23" fill="#f6f4f3"/><rect x="17" y="20" width="66" height="15" rx="7.500" fill="#b9b7b6"/><rect x="19" y="45" width="15" height="15" rx="3.500" fill="#f59a2f"/><rect x="42" y="45" width="15" height="15" rx="3.500" fill="#f24ea0"/><rect x="66" y="45" width="15" height="15" rx="3.500" fill="#22c58b"/><rect x="19" y="67" width="15" height="15" rx="3.500" fill="#c58cf6"/><rect x="42" y="67" width="15" height="15" rx="3.500" fill="#4db8f8"/><rect x="66" y="67" width="15" height="15" rx="3.500" fill="#b3b1b0"/></svg><svg style="left:106.36px;top:739.5px;" width="27.7" height="27.7" viewBox="0 0 100 100"><rect width="100" height="100" rx="23" fill="#f7f7f7"/><defs><linearGradient id="dsf" x1="0" y1="0" x2="0" y2="1"><stop offset="0" stop-color="#3fa5f5"/><stop offset="1" stop-color="#1a6fe8"/></linearGradient></defs><circle cx="50" cy="50" r="39" fill="url(#dsf)"/><path d="M76 24L56 56 44 44z" fill="#f2483c"/><path d="M24 76L44 44l12 12z" fill="#f4f4f4"/></svg><svg style="left:142.04px;top:739.5px;" width="27.7" height="27.7" viewBox="0 0 100 100"><defs><linearGradient id="dms" x1="0" y1="0" x2="0" y2="1"><stop offset="0" stop-color="#5ff06f"/><stop offset="1" stop-color="#1fc23a"/></linearGradient></defs><rect width="100" height="100" rx="23" fill="url(#dms)"/><path d="M50 21c19 0 33 12 33 27S69 75 50 75c-4 0-8-0.500-11-1.500-4 3.500-9 5.500-15 6 3-3 5-6.500 5.500-10.500C22 64 17 56.500 17 48c0-15 14-27 33-27z" fill="#e9f9e9" opacity="0.950"/></svg><svg style="left:177.72px;top:739.5px;" width="27.7" height="27.7" viewBox="0 0 100 100"><defs><linearGradient id="dml" x1="0" y1="0" x2="0" y2="1"><stop offset="0" stop-color="#4aa8ff"/><stop offset="1" stop-color="#1a68e8"/></linearGradient></defs><rect width="100" height="100" rx="23" fill="url(#dml)"/><rect x="14" y="27" width="72" height="47" rx="7" fill="#cfe6ff"/><path d="M15 31l35 27 35-27" fill="none" stroke="#7db4f6" stroke-width="4"/><path d="M14 74h72v10a16 16 0 0 1-16 16H30a16 16 0 0 1-16-16z" fill="#2b7cf0" opacity="0.500"/></svg><svg style="left:213.4px;top:739.5px;" width="27.7" height="27.7" viewBox="0 0 100 100"><defs><clipPath id="dmp"><rect width="100" height="100" rx="23"/></clipPath></defs><g clip-path="url(#dmp)"><rect width="100" height="100" fill="#f2f0e8"/><path d="M40 0h60v60c-20 14-50 0-60-60z" fill="#6fd87a"/><path d="M62 0h38v38c-14 6-34-8-38-38z" fill="#aee8a8"/><path d="M0 0h30v100H0z" fill="#f8f4ec"/><path d="M14 0h16v40H14z" fill="#3b9bf7"/><circle cx="24" cy="62" r="21" fill="#2b8cf5"/><path d="M24 47l10 24-10-5-10 5z" fill="#fff"/><path d="M30 84l22-6 14 22H30z" fill="#f6c93c"/><path d="M0 78l30 8v14H0z" fill="#fff"/><path d="M60 60l40-10v50H70z" fill="#f4f2ea"/></g></svg><svg style="left:249.08px;top:739.5px;" width="27.7" height="27.7" viewBox="0 0 100 100"><rect width="100" height="100" rx="23" fill="#fbfbfb"/><ellipse cx="50" cy="29" rx="11.500" ry="19" fill="#f9a32a" opacity="0.880" transform="rotate(0 50 50)"/><ellipse cx="50" cy="29" rx="11.500" ry="19" fill="#e8d42a" opacity="0.880" transform="rotate(45 50 50)"/><ellipse cx="50" cy="29" rx="11.500" ry="19" fill="#8fcf4a" opacity="0.880" transform="rotate(90 50 50)"/><ellipse cx="50" cy="29" rx="11.500" ry="19" fill="#3fc0a0" opacity="0.880" transform="rotate(135 50 50)"/><ellipse cx="50" cy="29" rx="11.500" ry="19" fill="#3f9ff0" opacity="0.880" transform="rotate(180 50 50)"/><ellipse cx="50" cy="29" rx="11.500" ry="19" fill="#7a70e8" opacity="0.880" transform="rotate(225 50 50)"/><ellipse cx="50" cy="29" rx="11.500" ry="19" fill="#d060c8" opacity="0.880" transform="rotate(270 50 50)"/><ellipse cx="50" cy="29" rx="11.500" ry="19" fill="#f4605a" opacity="0.880" transform="rotate(315 50 50)"/><circle cx="50" cy="50" r="4" fill="#fff" opacity="0.900"/></svg><svg style="left:284.76px;top:739.5px;" width="27.7" height="27.7" viewBox="0 0 100 100"><defs><linearGradient id="dft" x1="0" y1="0" x2="0" y2="1"><stop offset="0" stop-color="#5af06c"/><stop offset="1" stop-color="#1fc23a"/></linearGradient></defs><rect width="100" height="100" rx="23" fill="url(#dft)"/><rect x="16" y="30" width="48" height="40" rx="11" fill="#d9f6dc"/><path d="M66 46l16-13c2-1.500 4-0.500 4 2v30c0 2.500-2 3.500-4 2L66 54z" fill="#d9f6dc"/></svg><svg style="left:320.44px;top:739.5px;" width="27.7" height="27.7" viewBox="0 0 100 100"><rect width="100" height="100" rx="23" fill="#fbfbfb"/></svg><svg style="left:356.12px;top:739.5px;" width="27.7" height="27.7" viewBox="0 0 100 100"><defs><clipPath id="dct"><rect width="100" height="100" rx="23"/></clipPath></defs><g clip-path="url(#dct)"><rect width="100" height="100" fill="#cfc9bf"/><rect x="86" y="0" width="14" height="34" fill="#2bb5f0"/><rect x="86" y="34" width="14" height="33" fill="#f5a52a"/><rect x="86" y="67" width="14" height="33" fill="#3dcf6c"/><circle cx="45" cy="50" r="30" fill="#9d978e"/><circle cx="45" cy="40" r="11.500" fill="#f1eee9"/><path d="M23 70c3-10 12-14 22-14s19 4 22 14c-5 6-13 10-22 10s-17-4-22-10z" fill="#f1eee9"/></g></svg><svg style="left:391.8px;top:739.5px;" width="27.7" height="27.7" viewBox="0 0 100 100"><rect width="100" height="100" rx="23" fill="#fbfbfb"/><circle cx="22" cy="27.0" r="6" fill="#3a7bf2"/><rect x="36" y="26.0" width="52" height="2" fill="#d6d6d6"/><circle cx="22" cy="50.5" r="6" fill="#f0483e"/><rect x="36" y="49.5" width="52" height="2" fill="#d6d6d6"/><circle cx="22" cy="74.0" r="6" fill="#f59a2f"/><rect x="36" y="73.0" width="52" height="2" fill="#d6d6d6"/></svg><svg style="left:427.48px;top:739.5px;" width="27.7" height="27.7" viewBox="0 0 100 100"><defs><clipPath id="dnt"><rect width="100" height="100" rx="23"/></clipPath></defs><g clip-path="url(#dnt)"><rect width="100" height="100" fill="#fbfaf6"/><rect width="100" height="27" fill="#fbd230"/><rect x="0" y="27" width="100" height="1.500" fill="#e6c026"/><path d="M16 49h68M16 68h68" stroke="#d8d5cf" stroke-width="2"/></g></svg><svg style="left:463.16px;top:739.5px;" width="27.7" height="27.7" viewBox="0 0 100 100"><rect width="100" height="100" rx="23" fill="#fbfbf9"/><rect x="42" y="17" width="42" height="40" rx="8" fill="#36b8ea"/><circle cx="38" cy="62" r="21" fill="#f2683c" opacity="0.920"/><path d="M20 58c4-14 12-18 14-9 2 8 3 12 8 4 4-6 8-8 10-2 2 7 6 6 10 0 3-5 7-5 9 1 2 5 6 4 9-1" fill="none" stroke="#1c2c3a" stroke-width="4.500" stroke-linecap="round"/><path d="M30 78l20-8 12 16c-10 4-24 2-32-8z" fill="#f4c23c" opacity="0.900"/></svg><svg style="left:498.84px;top:739.5px;" width="27.7" height="27.7" viewBox="0 0 100 100"><rect width="100" height="100" rx="23" fill="#1b1b1d"/></svg><svg style="left:534.52px;top:739.5px;" width="27.7" height="27.7" viewBox="0 0 100 100"><defs><linearGradient id="dmu" x1="0" y1="0" x2="0" y2="1"><stop offset="0" stop-color="#fb5c74"/><stop offset="1" stop-color="#f4223e"/></linearGradient></defs><rect width="100" height="100" rx="23" fill="url(#dmu)"/><path d="M40 28l34-8v40c0 6-5 10-11 10s-9-3-9-7c0-5 4-8 10-9l4-1V33l-22 5v30c0 6-5 10-11 10s-9-3-9-7c0-5 4-8 10-9l4-1z" fill="#fff"/></svg><svg style="left:570.2px;top:739.5px;" width="27.7" height="27.7" viewBox="0 0 100 100"><defs><linearGradient id="dkn" x1="0" y1="0" x2="0" y2="1"><stop offset="0" stop-color="#3ba9ff"/><stop offset="1" stop-color="#1468e6"/></linearGradient></defs><rect width="100" height="100" rx="23" fill="url(#dkn)"/><path d="M24 20h52l5 24H19z" fill="#eaf3ff"/><circle cx="50" cy="30" r="8.500" fill="#e2574c"/><path d="M50 30V21.500a8.500 8.500 0 0 1 7.500 12.500z" fill="#6fc36b"/><path d="M50 30l7.500 4a8.500 8.500 0 0 1-12 2.500z" fill="#f2c440"/><rect x="48" y="44" width="4" height="36" fill="#eaf3ff"/><rect x="34" y="80" width="32" height="4" rx="2" fill="#eaf3ff"/></svg><svg style="left:605.88px;top:739.5px;" width="27.7" height="27.7" viewBox="0 0 100 100"><defs><linearGradient id="dnu" x1="0" y1="0" x2="0" y2="1"><stop offset="0" stop-color="#5de85a"/><stop offset="1" stop-color="#17b534"/></linearGradient></defs><rect width="100" height="100" rx="23" fill="url(#dnu)"/><rect x="20" y="64" width="11" height="18" rx="1.500" fill="#f2fff2"/><rect x="36" y="44" width="11" height="38" rx="1.500" fill="#f2fff2"/><rect x="52" y="18" width="11" height="64" rx="1.500" fill="#f2fff2"/><rect x="68" y="36" width="11" height="46" rx="1.500" fill="#f2fff2"/></svg><svg style="left:641.56px;top:739.5px;" width="27.7" height="27.7" viewBox="0 0 100 100"><defs><linearGradient id="dpg" x1="0" y1="0" x2="0" y2="1"><stop offset="0" stop-color="#ffae3c"/><stop offset="1" stop-color="#f58216"/></linearGradient></defs><rect width="100" height="100" rx="23" fill="url(#dpg)"/><path d="M76 18c4 2 5 6 3 10L36 74l-16 8 6-17L70 19c2-2 4-2 6-1z" fill="#fff6ea"/><path d="M26 65l10 9-16 8z" fill="#ffd9a6"/><rect x="22" y="84" width="58" height="2.500" fill="#ffe2bd"/></svg><svg style="left:677.24px;top:739.5px;" width="27.7" height="27.7" viewBox="0 0 100 100"><defs><linearGradient id="das" x1="0" y1="0" x2="0" y2="1"><stop offset="0" stop-color="#2fb4ff"/><stop offset="1" stop-color="#1868ea"/></linearGradient></defs><rect width="100" height="100" rx="23" fill="url(#das)"/><g stroke="#eef6ff" stroke-width="7" stroke-linecap="round" fill="none"><path d="M44 22L26 76M56 22l18 54M20 62h60"/><path d="M50 30l-5-9M50 30l5-9"/></g></svg><svg style="left:712.92px;top:739.5px;" width="27.7" height="27.7" viewBox="0 0 100 100"><defs><linearGradient id="dst" x1="0" y1="0" x2="0" y2="1"><stop offset="0" stop-color="#9b9ca0"/><stop offset="1" stop-color="#6d6e72"/></linearGradient></defs><rect width="100" height="100" rx="23" fill="url(#dst)"/><circle cx="50" cy="50" r="33" fill="none" stroke="#e4e5e7" stroke-width="6" stroke-dasharray="5.200 3.440"/><circle cx="50" cy="50" r="27" fill="none" stroke="#dfe0e2" stroke-width="5"/><circle cx="50" cy="50" r="7" fill="none" stroke="#e4e5e7" stroke-width="4"/><path d="M56.9 54.0L72.5 63.0" stroke="#e4e5e7" stroke-width="4.500"/><path d="M43.1 54.0L27.5 63.0" stroke="#e4e5e7" stroke-width="4.500"/><path d="M50.0 42.0L50.0 24.0" stroke="#e4e5e7" stroke-width="4.500"/></svg><svg style="left:748.6px;top:739.5px;" width="27.7" height="27.7" viewBox="0 0 100 100"><rect width="100" height="100" rx="25" fill="#fdfdfd"/></svg><svg style="left:784.28px;top:739.5px;" width="27.7" height="27.7" viewBox="0 0 100 100"><rect width="100" height="100" rx="25" fill="#fdfdfd"/></svg><svg style="left:819.96px;top:739.5px;" width="27.7" height="27.7" viewBox="0 0 100 100"><rect width="100" height="100" rx="25" fill="#fdfdfd"/></svg><svg style="left:872px;top:739.5px;" width="27.7" height="27.7" viewBox="0 0 100 100"><rect width="100" height="100" rx="23" fill="#fcfcfc"/><rect x="32" y="18" width="50" height="64" rx="5" fill="#2b7cd3"/><rect x="32" y="18" width="50" height="21" rx="5" fill="#41a5ee"/><rect x="32" y="34" width="50" height="16" fill="#2b7cd3"/><rect x="32" y="50" width="50" height="16" fill="#185abd"/><rect x="32" y="64" width="50" height="18" rx="5" fill="#103f91"/><rect x="12" y="32" width="38" height="38" rx="4" fill="#185abd"/></svg><svg style="left:908px;top:739.5px;" width="27.7" height="27.7" viewBox="0 0 100 100"><defs><linearGradient id="dsm" x1="0" y1="0" x2="0" y2="1"><stop offset="0" stop-color="#13225a"/><stop offset="1" stop-color="#1c8ac8"/></linearGradient></defs><rect width="100" height="100" rx="23" fill="#8f8f93"/><circle cx="50" cy="50" r="39" fill="url(#dsm)"/><path d="M11 52l26 11c3-2 6-2 9-1l12-17c0-9 7-16 16-16s16 7 16 16-7 16-16 16l-17 12c0 7-6 12-13 12s-12-5-13-11L12 66z" fill="#fff"/><circle cx="74" cy="45" r="10.500" fill="#1b4e8c"/><circle cx="74" cy="45" r="7" fill="none" stroke="#fff" stroke-width="3"/><circle cx="43" cy="72" r="8" fill="#173a78"/><circle cx="43" cy="72" r="5.500" fill="#fff"/></svg><svg style="left:943.7px;top:739.5px;" width="27.7" height="27.7" viewBox="0 0 100 100"><rect width="100" height="100" rx="23" fill="#17191b"/><path d="M18 10v80" stroke="#2c3a3a" stroke-width="0.800"/><path d="M8 20h84" stroke="#2c3a3a" stroke-width="0.800"/><path d="M34 10v80" stroke="#2c3a3a" stroke-width="0.800"/><path d="M8 35h84" stroke="#2c3a3a" stroke-width="0.800"/><path d="M50 10v80" stroke="#2c3a3a" stroke-width="0.800"/><path d="M8 50h84" stroke="#2c3a3a" stroke-width="0.800"/><path d="M66 10v80" stroke="#2c3a3a" stroke-width="0.800"/><path d="M8 65h84" stroke="#2c3a3a" stroke-width="0.800"/><path d="M82 10v80" stroke="#2c3a3a" stroke-width="0.800"/><path d="M8 80h84" stroke="#2c3a3a" stroke-width="0.800"/><path d="M4 56h12l4 8 5-50 6 74 7-44 6 16 7-22 7 18 6-8 8 10 7-3h10" fill="none" stroke="#3ad89a" stroke-width="4" stroke-linejoin="round"/></svg><svg style="left:979.2px;top:739.5px;" width="27.7" height="27.7" viewBox="0 0 100 100"><rect width="100" height="100" rx="23" fill="#98989c"/><path d="M18 22l50-5 16 12v52l-52 4-14-17z" fill="#fff" stroke="#111" stroke-width="4" stroke-linejoin="round"/><path d="M18 22l15 12 51-5" fill="none" stroke="#111" stroke-width="4"/><path d="M33 34v50" stroke="#111" stroke-width="4"/></svg><svg style="left:1015px;top:739.5px;" width="27.7" height="27.7" viewBox="0 0 100 100"><rect width="100" height="100" rx="23" fill="#d4140c"/><path d="M50 22c5 0 5 8 3 18-1 6-4 14-8 22-5 10-11 18-17 18-5 0-5-6 1-10 6-4 18-8 30-9 10-1 18 1 18 6s-8 5-15 0c-8-6-15-19-17-30-2-9 0-15 5-15z" fill="none" stroke="#fff" stroke-width="5" stroke-linejoin="round"/></svg><svg style="left:1050.2px;top:739.5px;" width="27.7" height="27.7" viewBox="0 0 100 100"><rect width="100" height="100" rx="18" fill="#8a8890"/><rect x="6" y="6" width="88" height="88" rx="6" fill="#2c0a52"/><path d="M50 28c6 4 12 6 19 6v15c0 12-7 20-19 25-12-5-19-13-19-25V34c7 0 13-2 19-6z" fill="none" stroke="#d8c8f0" stroke-width="3.500"/><path d="M41 50l7 7 12-13" fill="none" stroke="#d8c8f0" stroke-width="3.500" stroke-linecap="round" stroke-linejoin="round"/></svg><svg style="left:1085.8px;top:739.5px;" width="27.7" height="27.7" viewBox="0 0 100 100"><defs><linearGradient id="dlp" x1="0" y1="0" x2="0" y2="1"><stop offset="0" stop-color="#8dc2ff"/><stop offset="1" stop-color="#3d82f6"/></linearGradient></defs><rect width="100" height="100" rx="23" fill="url(#dlp)"/><path d="M27 42h46l4 32c0 8-12 13-27 13s-27-5-27-13z" fill="#a9d1ff" opacity="0.850"/><ellipse cx="50" cy="74" rx="20" ry="7" fill="#cfe6ff" opacity="0.800"/><ellipse cx="50" cy="33" rx="25" ry="13" fill="#15181c"/><path d="M25 33v12c0 7 11 12 25 12s25-5 25-12V33z" fill="#1b1f25"/><ellipse cx="50" cy="32" rx="19" ry="9" fill="#2b3a48"/><ellipse cx="50" cy="32" rx="13" ry="5.500" fill="#59c4e8"/></svg><svg style="left:1138.8px;top:738.6px;overflow:visible;" width="26.5" height="28.4" viewBox="0 0 100 100"><defs><linearGradient id="dtr" x1="0" y1="0" x2="1" y2="0"><stop offset="0" stop-color="#c9c6c3"/><stop offset="0.500" stop-color="#eeeceb"/><stop offset="1" stop-color="#bdb9b6"/></linearGradient></defs><path d="M6 20h88l-9 70c-1 5-4 8-9 8H24c-5 0-8-3-9-8z" fill="url(#dtr)" opacity="0.960"/><ellipse cx="50" cy="20" rx="44" ry="9" fill="#dedbd8"/><ellipse cx="50" cy="20" rx="40" ry="7" fill="#a9a5a1"/><path d="M14 14c6-9 14-10 20-4l8-8 10 10 10-9 12 9 12-2-4 12H16z" fill="#f4f2ee"/><rect x="30" y="8" width="9" height="8" fill="#e8d44a"/><rect x="56" y="6" width="10" height="9" fill="#3ab8e0"/><rect x="72" y="10" width="9" height="8" fill="#2a9a8a"/><rect x="44" y="10" width="8" height="7" fill="#e06a9a"/></svg><div style="left:47.45px;top:770px;width:2.8px;height:2.8px;background:#e6dcd6;border-radius:50%;opacity:0.9"></div><div style="left:118.81px;top:770px;width:2.8px;height:2.8px;background:#e6dcd6;border-radius:50%;opacity:0.9"></div><div style="left:154.49px;top:770px;width:2.8px;height:2.8px;background:#e6dcd6;border-radius:50%;opacity:0.9"></div><div style="left:190.17px;top:770px;width:2.8px;height:2.8px;background:#e6dcd6;border-radius:50%;opacity:0.9"></div><div style="left:225.85px;top:770px;width:2.8px;height:2.8px;background:#e6dcd6;border-radius:50%;opacity:0.9"></div><div style="left:261.53px;top:770px;width:2.8px;height:2.8px;background:#e6dcd6;border-radius:50%;opacity:0.9"></div><div style="left:332.89px;top:770px;width:2.8px;height:2.8px;background:#e6dcd6;border-radius:50%;opacity:0.9"></div><div style="left:404.25px;top:770px;width:2.8px;height:2.8px;background:#e6dcd6;border-radius:50%;opacity:0.9"></div><div style="left:439.93px;top:770px;width:2.8px;height:2.8px;background:#e6dcd6;border-radius:50%;opacity:0.9"></div><div style="left:582.65px;top:770px;width:2.8px;height:2.8px;background:#e6dcd6;border-radius:50%;opacity:0.9"></div><div style="left:689.69px;top:770px;width:2.8px;height:2.8px;background:#e6dcd6;border-radius:50%;opacity:0.9"></div><div style="left:725.37px;top:770px;width:2.8px;height:2.8px;background:#e6dcd6;border-radius:50%;opacity:0.9"></div><div style="left:884.45px;top:770px;width:2.8px;height:2.8px;background:#e6dcd6;border-radius:50%;opacity:0.9"></div><div style="left:920.45px;top:770px;width:2.8px;height:2.8px;background:#e6dcd6;border-radius:50%;opacity:0.9"></div><div style="left:956.15px;top:770px;width:2.8px;height:2.8px;background:#e6dcd6;border-radius:50%;opacity:0.9"></div><div style="left:991.65px;top:770px;width:2.8px;height:2.8px;background:#e6dcd6;border-radius:50%;opacity:0.9"></div><div style="left:1027.45px;top:770px;width:2.8px;height:2.8px;background:#e6dcd6;border-radius:50%;opacity:0.9"></div><div style="left:1062.65px;top:770px;width:2.8px;height:2.8px;background:#e6dcd6;border-radius:50%;opacity:0.9"></div><div style="left:1098.25px;top:770px;width:2.8px;height:2.8px;background:#e6dcd6;border-radius:50%;opacity:0.9"></div><div style="left:859.5px;top:736.5px;width:1px;height:33.5px;background:rgba(255,230,215,0.28)"></div><div style="left:1126px;top:736.5px;width:1px;height:33.5px;background:rgba(255,230,215,0.28)"></div><div style="left:160.8px;top:736px;width:13.2px;height:13.2px;background:#f2463c;border-radius:50%"></div><div style="left:194px;top:736px;width:15.4px;height:13.2px;background:#f2463c;border-radius:6.600px"></div><span class="t" style="left:162.74px;top:739.21px;font-size:7.2px;line-height:7.2px;color:#fff;letter-spacing:0.520px;">65</span><span class="t" style="left:195.94px;top:739.21px;font-size:7.2px;line-height:7.2px;color:#fff;letter-spacing:-0.140px;">179</span><span class="t" style="left:332.43px;top:742.13px;font-size:21.6px;line-height:21.6px;color:#f0453a;transform-origin:0 0;transform:scale(0.25);font-weight:700;letter-spacing:0.544px;">la</span><span class="t" style="left:326.13px;top:747.47px;font-size:17.4px;line-height:17.4px;color:#1c1c1e;letter-spacing:-0.904px;">15</span><span class="t" style="left:513.47px;top:748.23px;font-size:10.6px;line-height:10.6px;color:#f2f2f2;font-weight:700;letter-spacing:1.138px;">tv</span><svg style="left:505.2px;top:748.2px;" width="8" height="9.6" viewBox="1.500 2 14.400 17.400"><path fill="#f2f2f2" d="M12.900 11.200c0-2 1.600-2.900 1.700-3-0.900-1.400-2.400-1.600-2.900-1.600-1.200-0.100-2.400 0.700-3 0.700-0.600 0-1.600-0.700-2.600-0.700C4.700 6.700 3.400 7.500 2.700 8.700c-1.500 2.500-0.400 6.300 1 8.300 0.700 1 1.500 2.100 2.600 2.100 1 0 1.400-0.700 2.700-0.700 1.200 0 1.600 0.700 2.700 0.700 1.100 0 1.800-1 2.500-2 0.800-1.200 1.100-2.300 1.100-2.300 0 0-2.400-0.900-2.400-3.600zM10.800 5.100c0.600-0.700 0.900-1.600 0.800-2.600-0.800 0-1.800 0.500-2.400 1.200-0.500 0.600-1 1.600-0.800 2.500 0.900 0.100 1.800-0.400 2.400-1.100z"/></svg><span class="t" style="left:876.12px;top:750.16px;font-size:9.5px;line-height:9.5px;color:#fff;font-weight:700;">W</span><span class="t" style="left:988.77px;top:749.62px;font-size:12.5px;line-height:12.5px;color:#111;font-weight:700;font-family:'Liberation Serif', serif;">N</span></div></body></html>
